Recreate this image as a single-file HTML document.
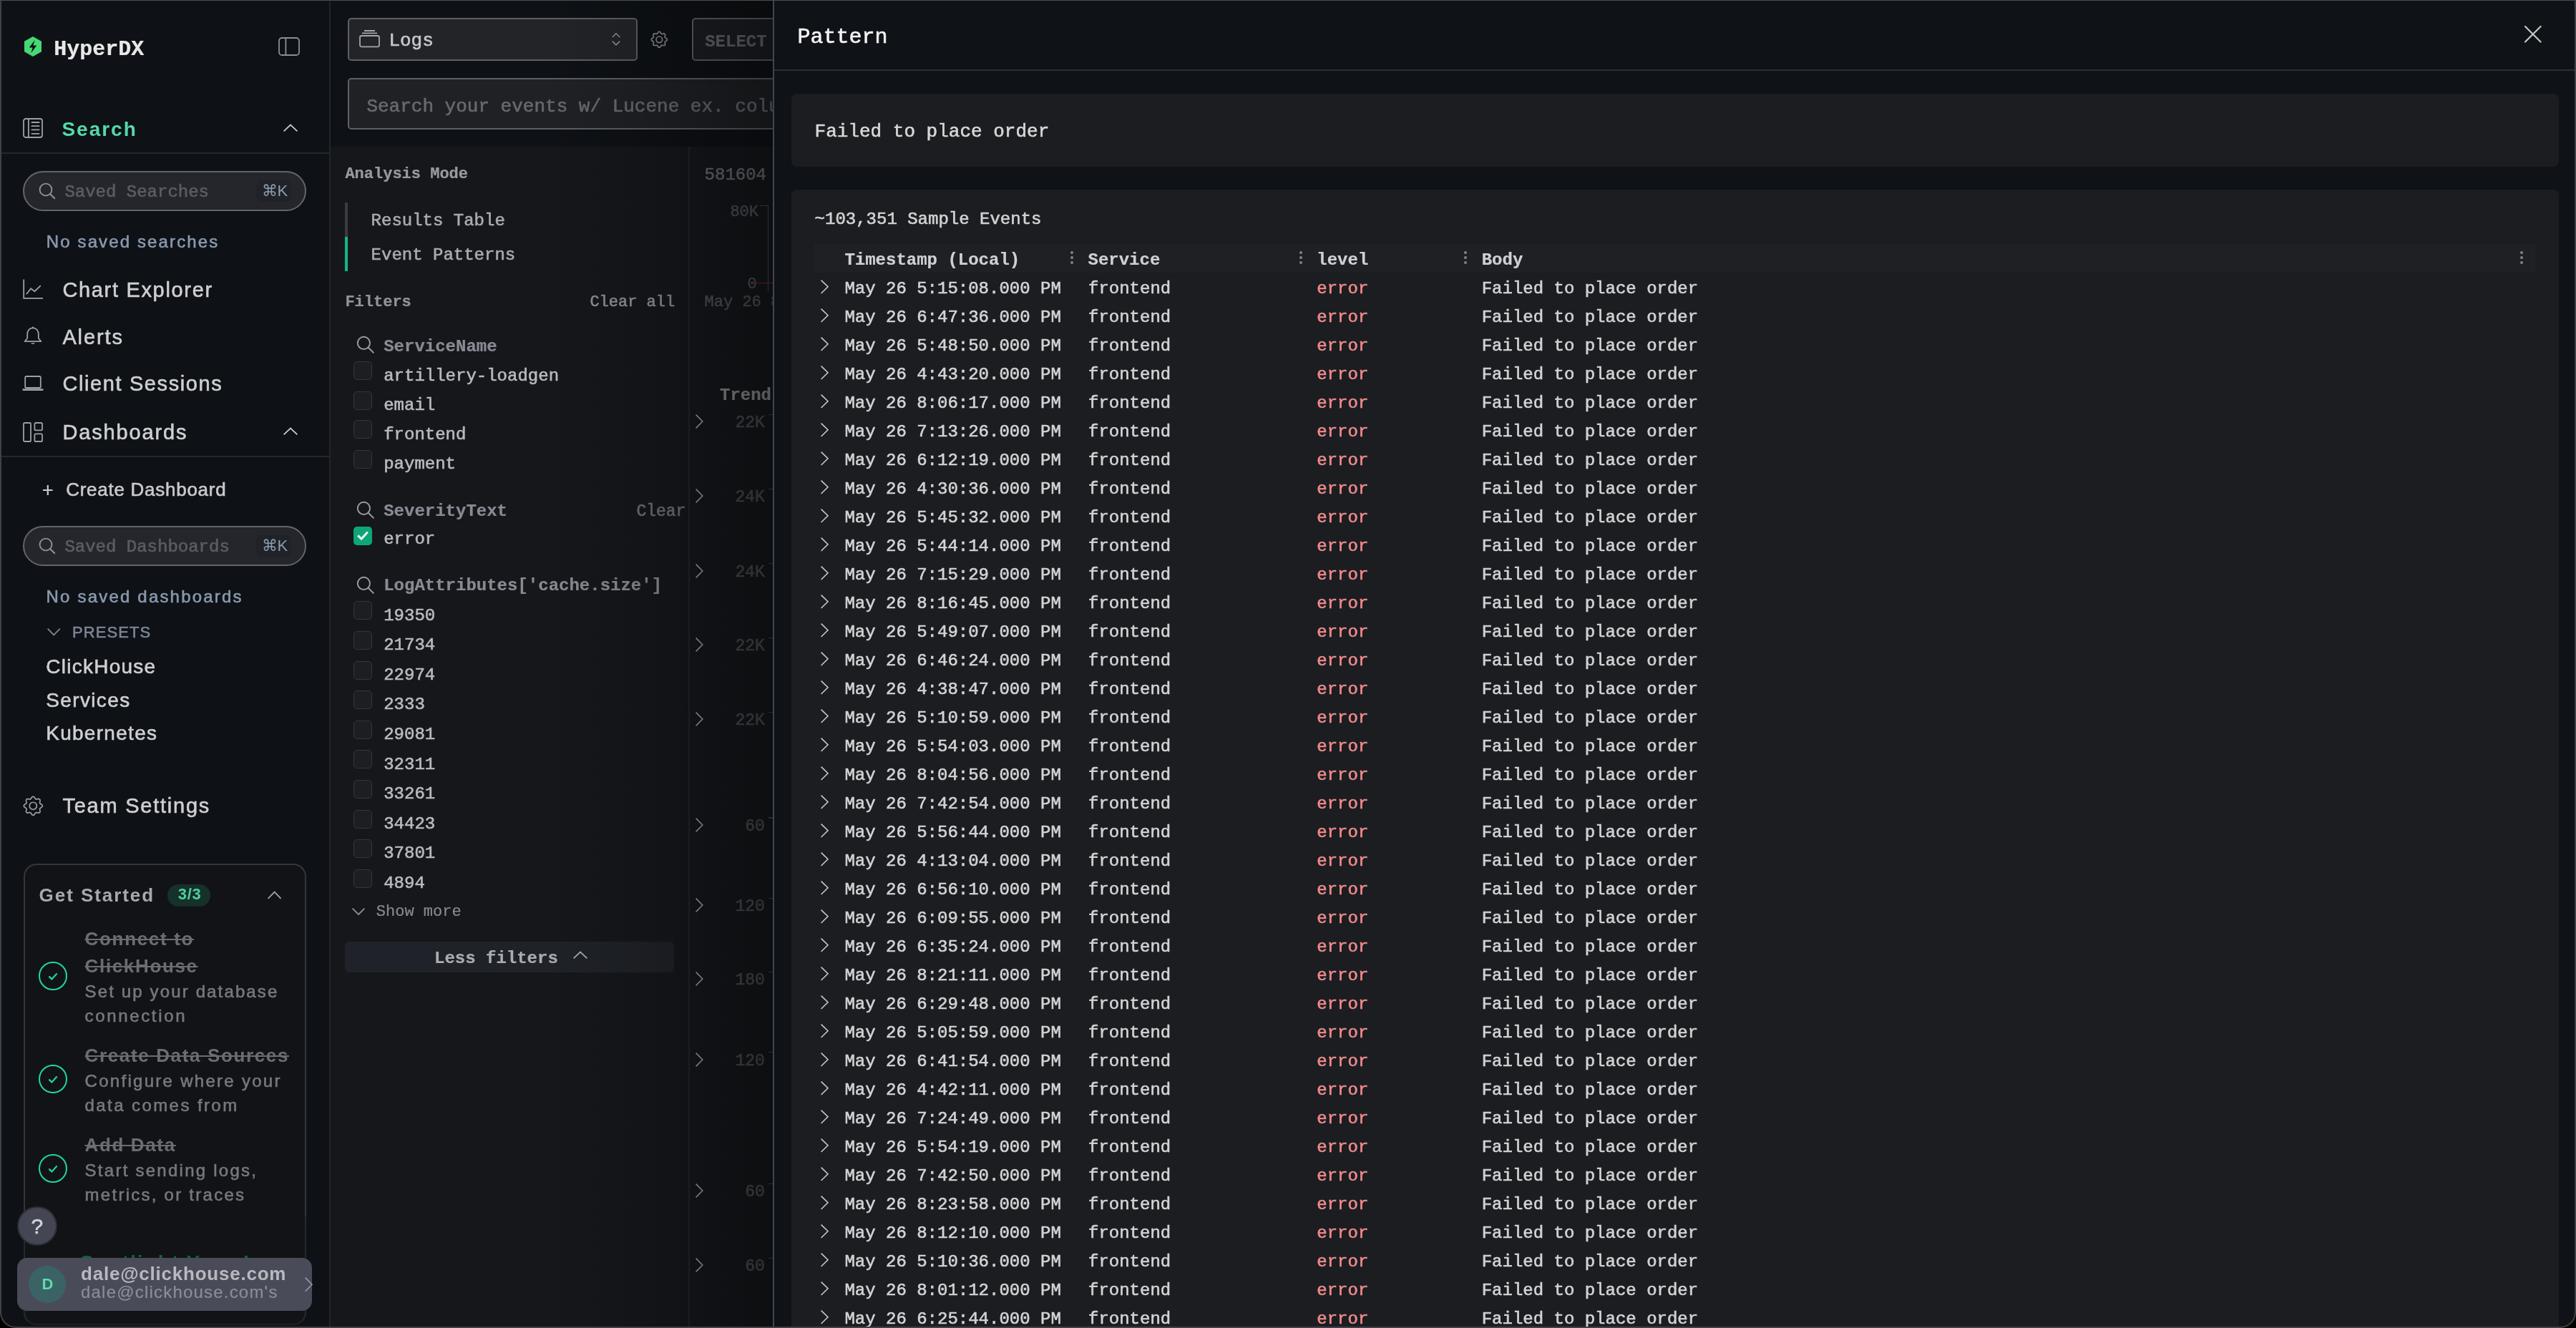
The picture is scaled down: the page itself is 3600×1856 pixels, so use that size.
<!DOCTYPE html>
<html><head><meta charset="utf-8">
<style>
html,body{margin:0;padding:0;background:#000;overflow:hidden;width:3600px;height:1856px;}
#root{zoom:2;position:relative;will-change:transform;width:1800px;height:928px;overflow:hidden;background:#0e1115;font-family:"Liberation Sans",sans-serif;}
.a{position:absolute;}
svg.a{display:block;overflow:visible;}
.t{position:absolute;white-space:nowrap;line-height:1;}
</style></head>
<body>
<div id="root">
<div class="a" style="left:0px;top:0px;width:230px;height:928px;background:#0e1115;"></div>
<div class="a" style="left:230px;top:0px;width:1px;height:928px;background:#212429;"></div>
<svg class="a" style="left:17px;top:25.5px;" width="12" height="14" viewBox="0 0 12 14"><polygon points="6,0 12,3.4 12,10.6 6,14 0,10.6 0,3.4" fill="#45d874"/><path d="M7.3 2.5 L3.4 7.7 L5.8 7.7 L4.7 11.6 L8.6 6.3 L6.2 6.3 Z" fill="#0e1115"/></svg>
<div class="t" style="left:37.6px;top:27.0px;font-size:15px;font-family:'Liberation Mono',monospace;font-weight:bold;color:#e8e8e8;-webkit-text-stroke:0.12px #e8e8e8;">HyperDX</div>
<svg class="a" style="left:194.3px;top:26px;" width="15" height="13" viewBox="0 0 15 13"><rect x="0.5" y="0.5" width="14" height="12" rx="2" fill="none" stroke="#8b8e94" stroke-width="0.9"/><line x1="5.2" y1="0.5" x2="5.2" y2="12.5" stroke="#8b8e94" stroke-width="0.9"/></svg>
<svg class="a" style="left:16px;top:82.5px;" width="14" height="14" viewBox="0 0 14 14"><rect x="0.5" y="0.5" width="13" height="13" rx="1.5" fill="none" stroke="#9aa1ac" stroke-width="0.9"/><line x1="3.95" y1="0.5" x2="3.95" y2="13.5" stroke="#9aa1ac" stroke-width="0.9"/><path d="M6.2 3H11.3M6.2 5.6H11.3M6.2 8.2H11.3M6.2 10.9H11.3" stroke="#9aa1ac" stroke-width="0.9" stroke-linecap="round"/></svg>
<div class="t" style="left:43.2px;top:83.44px;font-size:14px;font-family:'Liberation Sans',sans-serif;font-weight:bold;color:#56d9aa;letter-spacing:1.0px;">Search</div>
<svg class="a" style="left:198px;top:87px;" width="10" height="5" viewBox="0 0 10 5"><polyline points="0.3,4.7 5.0,0.3 9.7,4.7" fill="none" stroke="#c8c9cc" stroke-width="0.9"/></svg>
<div class="a" style="left:1px;top:106.5px;width:229px;height:1px;background:#24272c;"></div>
<div class="a" style="left:16px;top:119.6px;width:198px;height:27.9px;box-sizing:border-box;border:1px solid #64646e;border-radius:14px;background:#25262b;"></div>
<svg class="a" style="left:26.8px;top:127.5px;" width="12" height="12" viewBox="0 0 12 12"><circle cx="5" cy="5" r="4.2" fill="none" stroke="#8c9098" stroke-width="0.95"/><line x1="8.1" y1="8.1" x2="11.4" y2="11.4" stroke="#8c9098" stroke-width="1.1"/></svg>
<div class="t" style="left:45.2px;top:128.68px;font-size:12px;font-family:'Liberation Mono',monospace;font-weight:normal;color:#5a5d63;-webkit-text-stroke:0.3px #5a5d63;">Saved Searches</div>
<div class="a" style="left:178.8px;top:126px;width:24.5px;height:15px;border-radius:4px;background:#202227;"></div>
<div class="t" style="left:182.8px;top:128.16px;font-size:11px;font-family:'Liberation Sans',sans-serif;font-weight:normal;color:#8c9cb1;">⌘K</div>
<div class="t" style="left:32.4px;top:162.82px;font-size:12px;font-family:'Liberation Sans',sans-serif;font-weight:normal;color:#8898ae;letter-spacing:1.062px;-webkit-text-stroke:0.3px #8898ae;">No saved searches</div>
<svg class="a" style="left:16px;top:195px;" width="14" height="14" viewBox="0 0 14 14"><path d="M0.6 0.3V13.4H14" fill="none" stroke="#9aa1ac" stroke-width="0.9"/><polyline points="2.4,10.6 5.6,6.6 8.2,8.6 12.4,4.6" fill="none" stroke="#9aa1ac" stroke-width="0.9"/></svg>
<div class="t" style="left:43.7px;top:195.62px;font-size:14.5px;font-family:'Liberation Sans',sans-serif;font-weight:normal;color:#cfcfd2;letter-spacing:0.838px;-webkit-text-stroke:0.3px #cfcfd2;">Chart Explorer</div>
<svg class="a" style="left:16.4px;top:228px;" width="13" height="14" viewBox="0 0 13 14"><path d="M6.5 1.2C4 1.2 2.6 3.2 2.6 5.6V8.4L0.8 10.6H12.2L10.4 8.4V5.6C10.4 3.2 9 1.2 6.5 1.2Z" fill="none" stroke="#9aa1ac" stroke-width="0.9" stroke-linejoin="round"/><path d="M5 11.6A1.6 1.4 0 0 0 8 11.6Z" fill="#9aa1ac"/><circle cx="6.5" cy="0.9" r="0.6" fill="#9aa1ac"/></svg>
<div class="t" style="left:43.7px;top:228.42px;font-size:14.5px;font-family:'Liberation Sans',sans-serif;font-weight:normal;color:#cfcfd2;letter-spacing:0.94px;-webkit-text-stroke:0.3px #cfcfd2;">Alerts</div>
<svg class="a" style="left:16px;top:262.6px;" width="14" height="11" viewBox="0 0 14 11"><rect x="1.6" y="0.5" width="10.8" height="8" rx="0.8" fill="none" stroke="#9aa1ac" stroke-width="0.9"/><path d="M0.3 9.8H13.7" stroke="#9aa1ac" stroke-width="1.3" stroke-linecap="round"/></svg>
<div class="t" style="left:43.7px;top:261.22px;font-size:14.5px;font-family:'Liberation Sans',sans-serif;font-weight:normal;color:#cfcfd2;letter-spacing:0.807px;-webkit-text-stroke:0.3px #cfcfd2;">Client Sessions</div>
<svg class="a" style="left:16px;top:294.8px;" width="14" height="14" viewBox="0 0 14 14"><rect x="0.5" y="0.5" width="5" height="13" rx="0.8" fill="none" stroke="#9aa1ac" stroke-width="0.9"/><rect x="8.2" y="0.5" width="5.3" height="5.2" rx="0.8" fill="none" stroke="#9aa1ac" stroke-width="0.9"/><rect x="8.2" y="8.2" width="5.3" height="5.3" rx="0.8" fill="none" stroke="#9aa1ac" stroke-width="0.9"/></svg>
<div class="t" style="left:43.7px;top:294.82px;font-size:14.5px;font-family:'Liberation Sans',sans-serif;font-weight:normal;color:#cfcfd2;letter-spacing:0.933px;-webkit-text-stroke:0.3px #cfcfd2;">Dashboards</div>
<svg class="a" style="left:198px;top:299px;" width="10" height="5" viewBox="0 0 10 5"><polyline points="0.3,4.7 5.0,0.3 9.7,4.7" fill="none" stroke="#c8c9cc" stroke-width="0.9"/></svg>
<div class="a" style="left:1px;top:318.3px;width:229px;height:1px;background:#24272c;"></div>
<svg class="a" style="left:29.9px;top:339px;" width="6.8" height="7" viewBox="0 0 6.8 7"><path d="M3.4 0V7M0 3.5H6.8" stroke="#c9cacd" stroke-width="1.1"/></svg>
<div class="t" style="left:46.1px;top:335.63px;font-size:13px;font-family:'Liberation Sans',sans-serif;font-weight:normal;color:#c9cacd;letter-spacing:0.367px;-webkit-text-stroke:0.3px #c9cacd;">Create Dashboard</div>
<div class="a" style="left:16px;top:367.40000000000003px;width:198px;height:27.9px;box-sizing:border-box;border:1px solid #64646e;border-radius:14px;background:#25262b;"></div>
<svg class="a" style="left:26.8px;top:375.3px;" width="12" height="12" viewBox="0 0 12 12"><circle cx="5" cy="5" r="4.2" fill="none" stroke="#8c9098" stroke-width="0.95"/><line x1="8.1" y1="8.1" x2="11.4" y2="11.4" stroke="#8c9098" stroke-width="1.1"/></svg>
<div class="t" style="left:45.2px;top:376.48px;font-size:12px;font-family:'Liberation Mono',monospace;font-weight:normal;color:#5a5d63;-webkit-text-stroke:0.3px #5a5d63;">Saved Dashboards</div>
<div class="a" style="left:178.8px;top:373.8px;width:24.5px;height:15px;border-radius:4px;background:#202227;"></div>
<div class="t" style="left:182.8px;top:375.96px;font-size:11px;font-family:'Liberation Sans',sans-serif;font-weight:normal;color:#8c9cb1;">⌘K</div>
<div class="t" style="left:32.3px;top:410.92px;font-size:12px;font-family:'Liberation Sans',sans-serif;font-weight:normal;color:#8898ae;letter-spacing:1.094px;-webkit-text-stroke:0.3px #8898ae;">No saved dashboards</div>
<svg class="a" style="left:32.9px;top:439px;" width="9.2" height="5" viewBox="0 0 9.2 5"><polyline points="0.3,0.3 4.6,4.7 8.9,0.3" fill="none" stroke="#7b8596" stroke-width="0.9"/></svg>
<div class="t" style="left:50.5px;top:436.26px;font-size:11px;font-family:'Liberation Sans',sans-serif;font-weight:normal;color:#7b8596;letter-spacing:0.55px;-webkit-text-stroke:0.3px #7b8596;">PRESETS</div>
<div class="t" style="left:32.1px;top:458.94px;font-size:14px;font-family:'Liberation Sans',sans-serif;font-weight:normal;color:#cfcfd2;letter-spacing:0.633px;-webkit-text-stroke:0.3px #cfcfd2;">ClickHouse</div>
<div class="t" style="left:32.1px;top:482.34px;font-size:14px;font-family:'Liberation Sans',sans-serif;font-weight:normal;color:#cfcfd2;letter-spacing:0.686px;-webkit-text-stroke:0.3px #cfcfd2;">Services</div>
<div class="t" style="left:32.1px;top:505.74px;font-size:14px;font-family:'Liberation Sans',sans-serif;font-weight:normal;color:#cfcfd2;letter-spacing:0.644px;-webkit-text-stroke:0.3px #cfcfd2;">Kubernetes</div>
<svg class="a" style="left:16.25px;top:556.35px;" width="13.3" height="13.3" viewBox="0 0 13.3 13.3"><polygon points="6.65,0.13 7.07,0.24 7.45,0.55 7.78,0.98 8.05,1.41 8.31,1.77 8.58,1.98 8.93,2.03 9.36,1.96 9.86,1.84 10.39,1.77 10.88,1.82 11.26,2.04 11.48,2.42 11.53,2.91 11.46,3.44 11.34,3.94 11.27,4.37 11.32,4.72 11.53,4.99 11.89,5.25 12.32,5.52 12.75,5.85 13.06,6.23 13.17,6.65 13.06,7.07 12.75,7.45 12.32,7.78 11.89,8.05 11.53,8.31 11.32,8.58 11.27,8.93 11.34,9.36 11.46,9.86 11.53,10.39 11.48,10.88 11.26,11.26 10.88,11.48 10.39,11.53 9.86,11.46 9.36,11.34 8.93,11.27 8.58,11.32 8.31,11.53 8.05,11.89 7.78,12.32 7.45,12.75 7.07,13.06 6.65,13.17 6.23,13.06 5.85,12.75 5.52,12.32 5.25,11.89 4.99,11.53 4.72,11.32 4.37,11.27 3.94,11.34 3.44,11.46 2.91,11.53 2.42,11.48 2.04,11.26 1.82,10.88 1.77,10.39 1.84,9.86 1.96,9.36 2.03,8.93 1.98,8.58 1.77,8.31 1.41,8.05 0.98,7.78 0.55,7.45 0.24,7.07 0.13,6.65 0.24,6.23 0.55,5.85 0.98,5.52 1.41,5.25 1.77,4.99 1.98,4.72 2.03,4.37 1.96,3.94 1.84,3.44 1.77,2.91 1.82,2.42 2.04,2.04 2.42,1.82 2.91,1.77 3.44,1.84 3.94,1.96 4.37,2.03 4.72,1.98 4.99,1.77 5.25,1.41 5.52,0.98 5.85,0.55 6.23,0.24" fill="none" stroke="#9aa1ac" stroke-width="0.85" stroke-linejoin="round"/><circle cx="6.65" cy="6.65" r="2.527" fill="none" stroke="#9aa1ac" stroke-width="0.85"/></svg>
<div class="t" style="left:43.7px;top:555.92px;font-size:14.5px;font-family:'Liberation Sans',sans-serif;font-weight:normal;color:#cfcfd2;letter-spacing:0.883px;-webkit-text-stroke:0.3px #cfcfd2;">Team Settings</div>
<div class="a" style="left:16.4px;top:603.7px;width:197.8px;height:322.5px;box-sizing:border-box;border:1px solid #34363b;border-bottom-color:#25272b;border-radius:9px;background:#121316;"></div>
<div class="a" style="left:16.4px;top:850px;width:197.8px;height:76.2px;box-sizing:border-box;border:1px solid #26282c;border-top:0;border-bottom-color:#1f2125;border-radius:0 0 9px 9px;background:#121316;"></div>
<div class="t" style="left:27.3px;top:619.08px;font-size:13px;font-family:'Liberation Sans',sans-serif;font-weight:bold;color:#a8a9af;letter-spacing:0.97px;">Get Started</div>
<div class="a" style="left:117.2px;top:617.8px;width:29.6px;height:15.7px;border-radius:8px;background:#16302a;"></div>
<div class="t" style="left:124.4px;top:619.36px;font-size:11px;font-family:'Liberation Sans',sans-serif;font-weight:bold;color:#4fd1a0;letter-spacing:0.35px;">3/3</div>
<svg class="a" style="left:187.2px;top:623px;" width="9.6" height="5.3" viewBox="0 0 9.6 5.3"><polyline points="0.3,5.0 4.8,0.3 9.299999999999999,5.0" fill="none" stroke="#9aa1ac" stroke-width="0.9"/></svg>
<svg class="a" style="left:27px;top:672px;" width="20" height="20" viewBox="0 0 20 20"><circle cx="10" cy="10" r="9.5" fill="none" stroke="#20d7a0" stroke-width="1"/><polyline points="7.2,10.3 9.2,12.2 12.8,8.3" fill="none" stroke="#20d7a0" stroke-width="1.1"/></svg>
<div class="t" style="left:59.3px;top:649.48px;font-size:13px;font-family:'Liberation Sans',sans-serif;font-weight:bold;color:#6c6d73;letter-spacing:0.833px;text-decoration:line-through;text-decoration-thickness:1px;">Connect to</div>
<div class="t" style="left:59.3px;top:668.38px;font-size:13px;font-family:'Liberation Sans',sans-serif;font-weight:bold;color:#6c6d73;letter-spacing:0.822px;text-decoration:line-through;text-decoration-thickness:1px;">ClickHouse</div>
<div class="t" style="left:59.3px;top:687.12px;font-size:12px;font-family:'Liberation Sans',sans-serif;font-weight:normal;color:#77787e;letter-spacing:1.068px;-webkit-text-stroke:0.3px #77787e;">Set up your database</div>
<div class="t" style="left:59.3px;top:703.92px;font-size:12px;font-family:'Liberation Sans',sans-serif;font-weight:normal;color:#77787e;letter-spacing:1.322px;-webkit-text-stroke:0.3px #77787e;">connection</div>
<svg class="a" style="left:27px;top:743.8px;" width="20" height="20" viewBox="0 0 20 20"><circle cx="10" cy="10" r="9.5" fill="none" stroke="#20d7a0" stroke-width="1"/><polyline points="7.2,10.3 9.2,12.2 12.8,8.3" fill="none" stroke="#20d7a0" stroke-width="1.1"/></svg>
<div class="t" style="left:59.3px;top:731.08px;font-size:13px;font-family:'Liberation Sans',sans-serif;font-weight:bold;color:#6c6d73;letter-spacing:0.817px;text-decoration:line-through;text-decoration-thickness:1px;">Create Data Sources</div>
<div class="t" style="left:59.3px;top:749.42px;font-size:12px;font-family:'Liberation Sans',sans-serif;font-weight:normal;color:#77787e;letter-spacing:1.142px;-webkit-text-stroke:0.3px #77787e;">Configure where your</div>
<div class="t" style="left:59.3px;top:766.32px;font-size:12px;font-family:'Liberation Sans',sans-serif;font-weight:normal;color:#77787e;letter-spacing:1.207px;-webkit-text-stroke:0.3px #77787e;">data comes from</div>
<svg class="a" style="left:27px;top:806.5px;" width="20" height="20" viewBox="0 0 20 20"><circle cx="10" cy="10" r="9.5" fill="none" stroke="#20d7a0" stroke-width="1"/><polyline points="7.2,10.3 9.2,12.2 12.8,8.3" fill="none" stroke="#20d7a0" stroke-width="1.1"/></svg>
<div class="t" style="left:59.3px;top:793.43px;font-size:13px;font-family:'Liberation Sans',sans-serif;font-weight:bold;color:#6c6d73;letter-spacing:0.814px;text-decoration:line-through;text-decoration-thickness:1px;">Add Data</div>
<div class="t" style="left:59.3px;top:812.17px;font-size:12px;font-family:'Liberation Sans',sans-serif;font-weight:normal;color:#77787e;letter-spacing:1.128px;-webkit-text-stroke:0.3px #77787e;">Start sending logs,</div>
<div class="t" style="left:59.3px;top:828.92px;font-size:12px;font-family:'Liberation Sans',sans-serif;font-weight:normal;color:#77787e;letter-spacing:1.129px;-webkit-text-stroke:0.3px #77787e;">metrics, or traces</div>
<div class="a" style="left:12.2px;top:843.2px;width:27.6px;height:27.4px;box-sizing:border-box;border:1px solid #2c2d33;border-radius:50%;background:#454654;"></div>
<div class="t" style="left:21.8px;top:849.7px;font-size:15px;font-family:'Liberation Sans',sans-serif;font-weight:normal;color:#d2d3d8;-webkit-text-stroke:0.3px #d2d3d8;">?</div>
<div class="a" style="left:50px;top:868px;width:160px;height:12px;overflow:hidden;"><div class="t" style="left:6px;top:7.6px;font-size:14px;font-weight:bold;color:#12614a;font-family:'Liberation Sans',sans-serif;letter-spacing:1px;">Spotlight Your Logs</div></div>
<div class="a" style="left:12px;top:879px;width:206px;height:36.8px;border-radius:7px;background:#4a4b59;"></div>
<div class="a" style="left:20px;top:884.5px;width:26px;height:26px;border-radius:50%;background:#3b6265;"></div>
<div class="t" style="left:29.2px;top:891.96px;font-size:11px;font-family:'Liberation Sans',sans-serif;font-weight:bold;color:#5adcae;">D</div>
<div class="t" style="left:56.5px;top:883.38px;font-size:13px;font-family:'Liberation Sans',sans-serif;font-weight:bold;color:#b8b9c0;letter-spacing:0.389px;">dale@clickhouse.com</div>
<div class="t" style="left:56.5px;top:897.12px;font-size:12px;font-family:'Liberation Sans',sans-serif;font-weight:normal;color:#8c8d97;letter-spacing:0.6px;-webkit-text-stroke:0.1px #8c8d97;">dale@clickhouse.com's</div>
<svg class="a" style="left:212.9px;top:892.5px;" width="5.2" height="10.2" viewBox="0 0 5.2 10.2"><polyline points="0.3,0.3 5,5.1 0.3,9.9" fill="none" stroke="#8d9cb3" stroke-width="0.8"/></svg>
<div class="a" style="left:231px;top:0px;width:309px;height:928px;background:#15171b;"></div>
<div class="a" style="left:231px;top:0px;width:309px;height:102.5px;background:#0e1115;"></div>
<div class="a" style="left:243px;top:12.6px;width:202.4px;height:29.7px;box-sizing:border-box;border:1px solid #5f5f68;border-radius:2.5px;background:#222428;"></div>
<svg class="a" style="left:250.8px;top:20.8px;" width="14.5" height="12.2" viewBox="0 0 14.5 12.2"><rect x="0.5" y="4" width="13.5" height="7.7" rx="1.2" fill="none" stroke="#a3a6ab" stroke-width="0.9"/><path d="M2 2.2H12.5M3.5 0.5H11" stroke="#a3a6ab" stroke-width="0.9"/></svg>
<div class="t" style="left:271.7px;top:22.02px;font-size:13px;font-family:'Liberation Mono',monospace;font-weight:normal;color:#c6c7ca;-webkit-text-stroke:0.3px #c6c7ca;">Logs</div>
<svg class="a" style="left:427.5px;top:23px;" width="6" height="8.8" viewBox="0 0 6 8.8"><polyline points="0.4,3 3,0.4 5.6,3" fill="none" stroke="#8e9196" stroke-width="0.8"/><polyline points="0.4,5.8 3,8.4 5.6,5.8" fill="none" stroke="#8e9196" stroke-width="0.8"/></svg>
<svg class="a" style="left:454.75px;top:21.8px;" width="11.3" height="11.3" viewBox="0 0 11.3 11.3"><polygon points="5.65,0.11 6.01,0.21 6.33,0.47 6.61,0.83 6.84,1.20 7.06,1.51 7.29,1.68 7.59,1.72 7.95,1.66 8.38,1.56 8.83,1.50 9.25,1.55 9.57,1.73 9.75,2.05 9.80,2.47 9.74,2.92 9.64,3.35 9.58,3.71 9.62,4.01 9.79,4.24 10.10,4.46 10.47,4.69 10.83,4.97 11.09,5.29 11.19,5.65 11.09,6.01 10.83,6.33 10.47,6.61 10.10,6.84 9.79,7.06 9.62,7.29 9.58,7.59 9.64,7.95 9.74,8.38 9.80,8.83 9.75,9.25 9.57,9.57 9.25,9.75 8.83,9.80 8.38,9.74 7.95,9.64 7.59,9.58 7.29,9.62 7.06,9.79 6.84,10.10 6.61,10.47 6.33,10.83 6.01,11.09 5.65,11.19 5.29,11.09 4.97,10.83 4.69,10.47 4.46,10.10 4.24,9.79 4.01,9.62 3.71,9.58 3.35,9.64 2.92,9.74 2.47,9.80 2.05,9.75 1.73,9.57 1.55,9.25 1.50,8.83 1.56,8.38 1.66,7.95 1.72,7.59 1.68,7.29 1.51,7.06 1.20,6.84 0.83,6.61 0.47,6.33 0.21,6.01 0.11,5.65 0.21,5.29 0.47,4.97 0.83,4.69 1.20,4.46 1.51,4.24 1.68,4.01 1.72,3.71 1.66,3.35 1.56,2.92 1.50,2.47 1.55,2.05 1.73,1.73 2.05,1.55 2.47,1.50 2.92,1.56 3.35,1.66 3.71,1.72 4.01,1.68 4.24,1.51 4.46,1.20 4.69,0.83 4.97,0.47 5.29,0.21" fill="none" stroke="#87898d" stroke-width="0.85" stroke-linejoin="round"/><circle cx="5.65" cy="5.65" r="2.1470000000000002" fill="none" stroke="#87898d" stroke-width="0.85"/></svg>
<div class="a" style="left:483.5px;top:12.6px;width:120px;height:29.7px;box-sizing:border-box;border:1px solid #5f5f68;border-radius:2.5px;background:#1c1e22;"></div>
<div class="t" style="left:492.6px;top:23.38px;font-size:12px;font-family:'Liberation Mono',monospace;font-weight:bold;color:#66676c;-webkit-text-stroke:0.12px #66676c;">SELECT</div>
<div class="a" style="left:243px;top:54.5px;width:400px;height:36.1px;box-sizing:border-box;border:1px solid #5f5f68;border-radius:2.5px;background:#1f2125;"></div>
<div class="t" style="left:256.2px;top:67.82px;font-size:13px;font-family:'Liberation Mono',monospace;font-weight:normal;color:#66696e;-webkit-text-stroke:0.3px #66696e;">Search your events w/ Lucene ex. column:value</div>
<div class="a" style="left:481px;top:102.5px;width:1px;height:826px;background:#22252a;"></div>
<div class="t" style="left:241.2px;top:116.64px;font-size:11px;font-family:'Liberation Mono',monospace;font-weight:bold;color:#999a9d;-webkit-text-stroke:0.12px #999a9d;">Analysis Mode</div>
<div class="a" style="left:240.85px;top:141.5px;width:2.15px;height:23.85px;background:#3a3c41;"></div>
<div class="a" style="left:240.85px;top:165.35px;width:2.15px;height:24px;background:#12b886;"></div>
<div class="t" style="left:259.3px;top:148.68px;font-size:12px;font-family:'Liberation Mono',monospace;font-weight:normal;color:#aaabae;-webkit-text-stroke:0.3px #aaabae;">Results Table</div>
<div class="t" style="left:259.3px;top:172.68px;font-size:12px;font-family:'Liberation Mono',monospace;font-weight:normal;color:#aaabae;-webkit-text-stroke:0.3px #aaabae;">Event Patterns</div>
<div class="t" style="left:241.2px;top:205.79px;font-size:11px;font-family:'Liberation Mono',monospace;font-weight:bold;color:#939497;-webkit-text-stroke:0.12px #939497;">Filters</div>
<div class="t" style="left:412.2px;top:205.79px;font-size:11px;font-family:'Liberation Mono',monospace;font-weight:normal;color:#8f9195;-webkit-text-stroke:0.3px #8f9195;">Clear all</div>
<svg class="a" style="left:249px;top:234.7px;" width="12.7" height="12.7" viewBox="0 0 12.7 12.7"><circle cx="5.206999999999999" cy="5.206999999999999" r="4.3180000000000005" fill="none" stroke="#9a9ca1" stroke-width="0.95"/><line x1="8.382" y1="8.382" x2="12.191999999999998" y2="12.191999999999998" stroke="#9a9ca1" stroke-width="1"/></svg>
<div class="t" style="left:268.1px;top:236.38px;font-size:12px;font-family:'Liberation Mono',monospace;font-weight:bold;color:#8b8a94;-webkit-text-stroke:0.12px #8b8a94;">ServiceName</div>
<div class="a" style="left:247px;top:252.49999999999997px;width:13px;height:13px;box-sizing:border-box;border-radius:2.5px;border:0.8px solid #33363c;background:#1c1e22;"></div>
<div class="t" style="left:268.1px;top:256.78px;font-size:12px;font-family:'Liberation Mono',monospace;font-weight:normal;color:#b9babd;-webkit-text-stroke:0.3px #b9babd;">artillery-loadgen</div>
<div class="a" style="left:247px;top:273.3px;width:13px;height:13px;box-sizing:border-box;border-radius:2.5px;border:0.8px solid #33363c;background:#1c1e22;"></div>
<div class="t" style="left:268.1px;top:277.58px;font-size:12px;font-family:'Liberation Mono',monospace;font-weight:normal;color:#b9babd;-webkit-text-stroke:0.3px #b9babd;">email</div>
<div class="a" style="left:247px;top:293.6px;width:13px;height:13px;box-sizing:border-box;border-radius:2.5px;border:0.8px solid #33363c;background:#1c1e22;"></div>
<div class="t" style="left:268.1px;top:297.88px;font-size:12px;font-family:'Liberation Mono',monospace;font-weight:normal;color:#b9babd;-webkit-text-stroke:0.3px #b9babd;">frontend</div>
<div class="a" style="left:247px;top:314.3px;width:13px;height:13px;box-sizing:border-box;border-radius:2.5px;border:0.8px solid #33363c;background:#1c1e22;"></div>
<div class="t" style="left:268.1px;top:318.58px;font-size:12px;font-family:'Liberation Mono',monospace;font-weight:normal;color:#b9babd;-webkit-text-stroke:0.3px #b9babd;">payment</div>
<svg class="a" style="left:249px;top:349.8px;" width="12.7" height="12.7" viewBox="0 0 12.7 12.7"><circle cx="5.206999999999999" cy="5.206999999999999" r="4.3180000000000005" fill="none" stroke="#9a9ca1" stroke-width="0.95"/><line x1="8.382" y1="8.382" x2="12.191999999999998" y2="12.191999999999998" stroke="#9a9ca1" stroke-width="1"/></svg>
<div class="t" style="left:268.1px;top:351.48px;font-size:12px;font-family:'Liberation Mono',monospace;font-weight:bold;color:#8b8a94;-webkit-text-stroke:0.12px #8b8a94;">SeverityText</div>
<div class="t" style="left:444.7px;top:351.86px;font-size:11.5px;font-family:'Liberation Mono',monospace;font-weight:normal;color:#6e7074;-webkit-text-stroke:0.3px #6e7074;">Clear</div>
<div class="a" style="left:247px;top:368px;width:13px;height:13px;border-radius:2.5px;background:#0ca678;"></div>
<svg class="a" style="left:249.5px;top:371px;" width="8" height="6.5" viewBox="0 0 8 6.5"><polyline points="0.6,3.2 3,5.6 7.4,0.8" fill="none" stroke="#f2f2f2" stroke-width="1.5"/></svg>
<div class="t" style="left:268.1px;top:371.08px;font-size:12px;font-family:'Liberation Mono',monospace;font-weight:normal;color:#b9babd;-webkit-text-stroke:0.3px #b9babd;">error</div>
<svg class="a" style="left:249px;top:402.5px;" width="12.7" height="12.7" viewBox="0 0 12.7 12.7"><circle cx="5.206999999999999" cy="5.206999999999999" r="4.3180000000000005" fill="none" stroke="#9a9ca1" stroke-width="0.95"/><line x1="8.382" y1="8.382" x2="12.191999999999998" y2="12.191999999999998" stroke="#9a9ca1" stroke-width="1"/></svg>
<div class="t" style="left:268.1px;top:403.48px;font-size:12px;font-family:'Liberation Mono',monospace;font-weight:bold;color:#8b8a94;-webkit-text-stroke:0.12px #8b8a94;">LogAttributes['cache.size']</div>
<div class="a" style="left:247px;top:420.2px;width:13px;height:13px;box-sizing:border-box;border-radius:2.5px;border:0.8px solid #33363c;background:#1c1e22;"></div>
<div class="t" style="left:268.1px;top:424.28px;font-size:12px;font-family:'Liberation Mono',monospace;font-weight:normal;color:#b9babd;-webkit-text-stroke:0.3px #b9babd;">19350</div>
<div class="a" style="left:247px;top:441.0px;width:13px;height:13px;box-sizing:border-box;border-radius:2.5px;border:0.8px solid #33363c;background:#1c1e22;"></div>
<div class="t" style="left:268.1px;top:445.08px;font-size:12px;font-family:'Liberation Mono',monospace;font-weight:normal;color:#b9babd;-webkit-text-stroke:0.3px #b9babd;">21734</div>
<div class="a" style="left:247px;top:461.8px;width:13px;height:13px;box-sizing:border-box;border-radius:2.5px;border:0.8px solid #33363c;background:#1c1e22;"></div>
<div class="t" style="left:268.1px;top:465.88px;font-size:12px;font-family:'Liberation Mono',monospace;font-weight:normal;color:#b9babd;-webkit-text-stroke:0.3px #b9babd;">22974</div>
<div class="a" style="left:247px;top:482.59999999999997px;width:13px;height:13px;box-sizing:border-box;border-radius:2.5px;border:0.8px solid #33363c;background:#1c1e22;"></div>
<div class="t" style="left:268.1px;top:486.68px;font-size:12px;font-family:'Liberation Mono',monospace;font-weight:normal;color:#b9babd;-webkit-text-stroke:0.3px #b9babd;">2333</div>
<div class="a" style="left:247px;top:503.40000000000003px;width:13px;height:13px;box-sizing:border-box;border-radius:2.5px;border:0.8px solid #33363c;background:#1c1e22;"></div>
<div class="t" style="left:268.1px;top:507.48px;font-size:12px;font-family:'Liberation Mono',monospace;font-weight:normal;color:#b9babd;-webkit-text-stroke:0.3px #b9babd;">29081</div>
<div class="a" style="left:247px;top:524.1999999999999px;width:13px;height:13px;box-sizing:border-box;border-radius:2.5px;border:0.8px solid #33363c;background:#1c1e22;"></div>
<div class="t" style="left:268.1px;top:528.28px;font-size:12px;font-family:'Liberation Mono',monospace;font-weight:normal;color:#b9babd;-webkit-text-stroke:0.3px #b9babd;">32311</div>
<div class="a" style="left:247px;top:545.0px;width:13px;height:13px;box-sizing:border-box;border-radius:2.5px;border:0.8px solid #33363c;background:#1c1e22;"></div>
<div class="t" style="left:268.1px;top:549.08px;font-size:12px;font-family:'Liberation Mono',monospace;font-weight:normal;color:#b9babd;-webkit-text-stroke:0.3px #b9babd;">33261</div>
<div class="a" style="left:247px;top:565.8px;width:13px;height:13px;box-sizing:border-box;border-radius:2.5px;border:0.8px solid #33363c;background:#1c1e22;"></div>
<div class="t" style="left:268.1px;top:569.88px;font-size:12px;font-family:'Liberation Mono',monospace;font-weight:normal;color:#b9babd;-webkit-text-stroke:0.3px #b9babd;">34423</div>
<div class="a" style="left:247px;top:586.5999999999999px;width:13px;height:13px;box-sizing:border-box;border-radius:2.5px;border:0.8px solid #33363c;background:#1c1e22;"></div>
<div class="t" style="left:268.1px;top:590.68px;font-size:12px;font-family:'Liberation Mono',monospace;font-weight:normal;color:#b9babd;-webkit-text-stroke:0.3px #b9babd;">37801</div>
<div class="a" style="left:247px;top:607.4px;width:13px;height:13px;box-sizing:border-box;border-radius:2.5px;border:0.8px solid #33363c;background:#1c1e22;"></div>
<div class="t" style="left:268.1px;top:611.48px;font-size:12px;font-family:'Liberation Mono',monospace;font-weight:normal;color:#b9babd;-webkit-text-stroke:0.3px #b9babd;">4894</div>
<svg class="a" style="left:246px;top:634.3px;" width="9" height="4.8" viewBox="0 0 9 4.8"><polyline points="0.3,0.3 4.5,4.5 8.7,0.3" fill="none" stroke="#8e9094" stroke-width="0.9"/></svg>
<div class="t" style="left:262.9px;top:631.84px;font-size:11px;font-family:'Liberation Mono',monospace;font-weight:normal;color:#88898f;-webkit-text-stroke:0.1px #88898f;">Show more</div>
<div class="a" style="left:241.2px;top:657.8px;width:229.7px;height:21.5px;border-radius:3px;background:#1f2228;"></div>
<div class="t" style="left:303.5px;top:663.88px;font-size:12px;font-family:'Liberation Mono',monospace;font-weight:bold;color:#abacb2;-webkit-text-stroke:0.12px #abacb2;">Less filters</div>
<svg class="a" style="left:400.4px;top:665px;" width="10" height="5" viewBox="0 0 10 5"><polyline points="0.3,4.7 5.0,0.3 9.7,4.7" fill="none" stroke="#abacb2" stroke-width="0.9"/></svg>
<div class="t" style="left:492.3px;top:116.48px;font-size:12px;font-family:'Liberation Mono',monospace;font-weight:normal;color:#67696d;-webkit-text-stroke:0.3px #67696d;">581604</div>
<div class="t" style="left:510.2px;top:142.84px;font-size:11px;font-family:'Liberation Mono',monospace;font-weight:normal;color:#4d4f53;-webkit-text-stroke:0.3px #4d4f53;">80K</div>
<div class="a" style="left:531px;top:143.4px;width:6px;height:0.6px;background:#4a4c50;"></div>
<div class="a" style="left:536.6px;top:143.4px;width:0.6px;height:60px;background:#4a4c50;"></div>
<div class="t" style="left:522.3px;top:193.44px;font-size:11px;font-family:'Liberation Mono',monospace;font-weight:normal;color:#4d4f53;-webkit-text-stroke:0.3px #4d4f53;">0</div>
<div class="a" style="left:526.5px;top:197.5px;width:14px;height:0.7px;background:#7a2838;"></div>
<div class="t" style="left:492.3px;top:205.94px;font-size:11px;font-family:'Liberation Mono',monospace;font-weight:normal;color:#4d4f53;-webkit-text-stroke:0.3px #4d4f53;">May 26 8</div>
<div class="t" style="left:503px;top:270.38px;font-size:12px;font-family:'Liberation Mono',monospace;font-weight:bold;color:#8a8b8e;-webkit-text-stroke:0.12px #8a8b8e;">Trend</div>
<svg class="a" style="left:486.2px;top:289.6px;" width="5.2" height="10" viewBox="0 0 5.2 10"><polyline points="0.3,0.3 4.9,5 0.3,9.7" fill="none" stroke="#9ea0a4" stroke-width="0.8"/></svg>
<div class="t" style="left:513.7px;top:290.06px;font-size:11.5px;font-family:'Liberation Mono',monospace;font-weight:normal;color:#4a4c50;-webkit-text-stroke:0.3px #4a4c50;">22K</div>
<div class="a" style="left:537px;top:289.40000000000003px;width:3px;height:0.6px;background:#45474b;"></div>
<svg class="a" style="left:486.2px;top:341.5px;" width="5.2" height="10" viewBox="0 0 5.2 10"><polyline points="0.3,0.3 4.9,5 0.3,9.7" fill="none" stroke="#9ea0a4" stroke-width="0.8"/></svg>
<div class="t" style="left:513.7px;top:341.96px;font-size:11.5px;font-family:'Liberation Mono',monospace;font-weight:normal;color:#4a4c50;-webkit-text-stroke:0.3px #4a4c50;">24K</div>
<div class="a" style="left:537px;top:341.3px;width:3px;height:0.6px;background:#45474b;"></div>
<svg class="a" style="left:486.2px;top:393.8px;" width="5.2" height="10" viewBox="0 0 5.2 10"><polyline points="0.3,0.3 4.9,5 0.3,9.7" fill="none" stroke="#9ea0a4" stroke-width="0.8"/></svg>
<div class="t" style="left:513.7px;top:394.26px;font-size:11.5px;font-family:'Liberation Mono',monospace;font-weight:normal;color:#4a4c50;-webkit-text-stroke:0.3px #4a4c50;">24K</div>
<div class="a" style="left:537px;top:393.6px;width:3px;height:0.6px;background:#45474b;"></div>
<svg class="a" style="left:486.2px;top:445.7px;" width="5.2" height="10" viewBox="0 0 5.2 10"><polyline points="0.3,0.3 4.9,5 0.3,9.7" fill="none" stroke="#9ea0a4" stroke-width="0.8"/></svg>
<div class="t" style="left:513.7px;top:446.16px;font-size:11.5px;font-family:'Liberation Mono',monospace;font-weight:normal;color:#4a4c50;-webkit-text-stroke:0.3px #4a4c50;">22K</div>
<div class="a" style="left:537px;top:445.5px;width:3px;height:0.6px;background:#45474b;"></div>
<svg class="a" style="left:486.2px;top:497.5px;" width="5.2" height="10" viewBox="0 0 5.2 10"><polyline points="0.3,0.3 4.9,5 0.3,9.7" fill="none" stroke="#9ea0a4" stroke-width="0.8"/></svg>
<div class="t" style="left:513.7px;top:497.96px;font-size:11.5px;font-family:'Liberation Mono',monospace;font-weight:normal;color:#4a4c50;-webkit-text-stroke:0.3px #4a4c50;">22K</div>
<div class="a" style="left:537px;top:497.3px;width:3px;height:0.6px;background:#45474b;"></div>
<svg class="a" style="left:486.2px;top:571.4px;" width="5.2" height="10" viewBox="0 0 5.2 10"><polyline points="0.3,0.3 4.9,5 0.3,9.7" fill="none" stroke="#9ea0a4" stroke-width="0.8"/></svg>
<div class="t" style="left:520.6px;top:571.86px;font-size:11.5px;font-family:'Liberation Mono',monospace;font-weight:normal;color:#4a4c50;-webkit-text-stroke:0.3px #4a4c50;">60</div>
<div class="a" style="left:537px;top:571.1999999999999px;width:3px;height:0.6px;background:#45474b;"></div>
<svg class="a" style="left:486.2px;top:627.6px;" width="5.2" height="10" viewBox="0 0 5.2 10"><polyline points="0.3,0.3 4.9,5 0.3,9.7" fill="none" stroke="#9ea0a4" stroke-width="0.8"/></svg>
<div class="t" style="left:513.7px;top:628.06px;font-size:11.5px;font-family:'Liberation Mono',monospace;font-weight:normal;color:#4a4c50;-webkit-text-stroke:0.3px #4a4c50;">120</div>
<div class="a" style="left:537px;top:627.4px;width:3px;height:0.6px;background:#45474b;"></div>
<svg class="a" style="left:486.2px;top:679.1px;" width="5.2" height="10" viewBox="0 0 5.2 10"><polyline points="0.3,0.3 4.9,5 0.3,9.7" fill="none" stroke="#9ea0a4" stroke-width="0.8"/></svg>
<div class="t" style="left:513.7px;top:679.56px;font-size:11.5px;font-family:'Liberation Mono',monospace;font-weight:normal;color:#4a4c50;-webkit-text-stroke:0.3px #4a4c50;">180</div>
<div class="a" style="left:537px;top:678.9px;width:3px;height:0.6px;background:#45474b;"></div>
<svg class="a" style="left:486.2px;top:735.3px;" width="5.2" height="10" viewBox="0 0 5.2 10"><polyline points="0.3,0.3 4.9,5 0.3,9.7" fill="none" stroke="#9ea0a4" stroke-width="0.8"/></svg>
<div class="t" style="left:513.7px;top:735.76px;font-size:11.5px;font-family:'Liberation Mono',monospace;font-weight:normal;color:#4a4c50;-webkit-text-stroke:0.3px #4a4c50;">120</div>
<div class="a" style="left:537px;top:735.0999999999999px;width:3px;height:0.6px;background:#45474b;"></div>
<svg class="a" style="left:486.2px;top:827.2px;" width="5.2" height="10" viewBox="0 0 5.2 10"><polyline points="0.3,0.3 4.9,5 0.3,9.7" fill="none" stroke="#9ea0a4" stroke-width="0.8"/></svg>
<div class="t" style="left:520.6px;top:827.66px;font-size:11.5px;font-family:'Liberation Mono',monospace;font-weight:normal;color:#4a4c50;-webkit-text-stroke:0.3px #4a4c50;">60</div>
<div class="a" style="left:537px;top:827.0px;width:3px;height:0.6px;background:#45474b;"></div>
<svg class="a" style="left:486.2px;top:879px;" width="5.2" height="10" viewBox="0 0 5.2 10"><polyline points="0.3,0.3 4.9,5 0.3,9.7" fill="none" stroke="#9ea0a4" stroke-width="0.8"/></svg>
<div class="t" style="left:520.6px;top:879.46px;font-size:11.5px;font-family:'Liberation Mono',monospace;font-weight:normal;color:#4a4c50;-webkit-text-stroke:0.3px #4a4c50;">60</div>
<div class="a" style="left:537px;top:878.8px;width:3px;height:0.6px;background:#45474b;"></div>
<div class="a" style="left:380px;top:0;width:160px;height:928px;background:linear-gradient(90deg,rgba(0,0,0,0) 0%,rgba(0,0,0,0.12) 40%,rgba(0,0,0,0.38) 100%);"></div>
<div class="a" style="left:540px;top:0;width:1px;height:928px;background:#3d4657;"></div>
<div class="a" style="left:541px;top:0px;width:1259px;height:928px;background:#0f1216;"></div>
<div class="t" style="left:557.2px;top:18.4px;font-size:15px;font-family:'Liberation Mono',monospace;font-weight:normal;color:#f3f3f3;-webkit-text-stroke:0.3px #f3f3f3;">Pattern</div>
<svg class="a" style="left:1763.8px;top:18.2px;" width="11.8" height="11.8" viewBox="0 0 11.8 11.8"><path d="M0.5 0.5L11.3 11.3M11.3 0.5L0.5 11.3" stroke="#c6c6c6" stroke-width="1.1" stroke-linecap="round"/></svg>
<div class="a" style="left:541px;top:48.5px;width:1259px;height:1px;background:#2b2e34;"></div>
<div class="a" style="left:553px;top:65.6px;width:1235px;height:50.7px;border-radius:4px;background:#1b1d21;"></div>
<div class="t" style="left:569.3px;top:85.72px;font-size:13px;font-family:'Liberation Mono',monospace;font-weight:normal;color:#d7d7d7;-webkit-text-stroke:0.3px #d7d7d7;">Failed to place order</div>
<div class="a" style="left:553px;top:132.3px;width:1235px;height:830px;border-radius:4px;background:#1b1d21;"></div>
<div class="t" style="left:569.3px;top:147.33px;font-size:12px;font-family:'Liberation Mono',monospace;font-weight:normal;color:#d2d2d3;-webkit-text-stroke:0.3px #d2d2d3;">~103,351 Sample Events</div>
<div class="a" style="left:568.8px;top:170.5px;width:1202.7px;height:20.2px;background:#1e2024;"></div>
<div class="t" style="left:590.2px;top:176.13px;font-size:12px;font-family:'Liberation Mono',monospace;font-weight:bold;color:#cfd0d3;-webkit-text-stroke:0.12px #cfd0d3;">Timestamp (Local)</div>
<div class="t" style="left:760.25px;top:176.13px;font-size:12px;font-family:'Liberation Mono',monospace;font-weight:bold;color:#cfd0d3;-webkit-text-stroke:0.12px #cfd0d3;">Service</div>
<div class="t" style="left:920.15px;top:176.13px;font-size:12px;font-family:'Liberation Mono',monospace;font-weight:bold;color:#cfd0d3;-webkit-text-stroke:0.12px #cfd0d3;">level</div>
<div class="t" style="left:1035.35px;top:176.13px;font-size:12px;font-family:'Liberation Mono',monospace;font-weight:bold;color:#cfd0d3;-webkit-text-stroke:0.12px #cfd0d3;">Body</div>
<svg class="a" style="left:748px;top:175.6px;" width="2" height="9" viewBox="0 0 2 9"><circle cx="1" cy="1" r="1" fill="#7c8590"/><circle cx="1" cy="4.5" r="1" fill="#7c8590"/><circle cx="1" cy="8" r="1" fill="#7c8590"/></svg>
<svg class="a" style="left:907.85px;top:175.6px;" width="2" height="9" viewBox="0 0 2 9"><circle cx="1" cy="1" r="1" fill="#7c8590"/><circle cx="1" cy="4.5" r="1" fill="#7c8590"/><circle cx="1" cy="8" r="1" fill="#7c8590"/></svg>
<svg class="a" style="left:1022.75px;top:175.6px;" width="2" height="9" viewBox="0 0 2 9"><circle cx="1" cy="1" r="1" fill="#7c8590"/><circle cx="1" cy="4.5" r="1" fill="#7c8590"/><circle cx="1" cy="8" r="1" fill="#7c8590"/></svg>
<svg class="a" style="left:1761px;top:175.6px;" width="2" height="9" viewBox="0 0 2 9"><circle cx="1" cy="1" r="1" fill="#7c8590"/><circle cx="1" cy="4.5" r="1" fill="#7c8590"/><circle cx="1" cy="8" r="1" fill="#7c8590"/></svg>
<svg class="a" style="left:573.25px;top:195.6px;" width="5.4" height="9.8" viewBox="0 0 5.4 9.8"><polyline points="0.3,0.3 5,4.9 0.3,9.5" fill="none" stroke="#c9c9ca" stroke-width="0.8"/></svg>
<div class="t" style="left:590.2px;top:196.13px;font-size:12px;font-family:'Liberation Mono',monospace;font-weight:normal;color:#d3d3d4;-webkit-text-stroke:0.3px #d3d3d4;">May 26 5:15:08.000 PM</div>
<div class="t" style="left:760.5px;top:196.13px;font-size:12px;font-family:'Liberation Mono',monospace;font-weight:normal;color:#d3d3d4;-webkit-text-stroke:0.3px #d3d3d4;">frontend</div>
<div class="t" style="left:920.15px;top:196.13px;font-size:12px;font-family:'Liberation Mono',monospace;font-weight:normal;color:#f08a8a;-webkit-text-stroke:0.3px #f08a8a;">error</div>
<div class="t" style="left:1035.35px;top:196.13px;font-size:12px;font-family:'Liberation Mono',monospace;font-weight:normal;color:#d3d3d4;-webkit-text-stroke:0.3px #d3d3d4;">Failed to place order</div>
<svg class="a" style="left:573.25px;top:215.6px;" width="5.4" height="9.8" viewBox="0 0 5.4 9.8"><polyline points="0.3,0.3 5,4.9 0.3,9.5" fill="none" stroke="#c9c9ca" stroke-width="0.8"/></svg>
<div class="t" style="left:590.2px;top:216.13px;font-size:12px;font-family:'Liberation Mono',monospace;font-weight:normal;color:#d3d3d4;-webkit-text-stroke:0.3px #d3d3d4;">May 26 6:47:36.000 PM</div>
<div class="t" style="left:760.5px;top:216.13px;font-size:12px;font-family:'Liberation Mono',monospace;font-weight:normal;color:#d3d3d4;-webkit-text-stroke:0.3px #d3d3d4;">frontend</div>
<div class="t" style="left:920.15px;top:216.13px;font-size:12px;font-family:'Liberation Mono',monospace;font-weight:normal;color:#f08a8a;-webkit-text-stroke:0.3px #f08a8a;">error</div>
<div class="t" style="left:1035.35px;top:216.13px;font-size:12px;font-family:'Liberation Mono',monospace;font-weight:normal;color:#d3d3d4;-webkit-text-stroke:0.3px #d3d3d4;">Failed to place order</div>
<svg class="a" style="left:573.25px;top:235.6px;" width="5.4" height="9.8" viewBox="0 0 5.4 9.8"><polyline points="0.3,0.3 5,4.9 0.3,9.5" fill="none" stroke="#c9c9ca" stroke-width="0.8"/></svg>
<div class="t" style="left:590.2px;top:236.13px;font-size:12px;font-family:'Liberation Mono',monospace;font-weight:normal;color:#d3d3d4;-webkit-text-stroke:0.3px #d3d3d4;">May 26 5:48:50.000 PM</div>
<div class="t" style="left:760.5px;top:236.13px;font-size:12px;font-family:'Liberation Mono',monospace;font-weight:normal;color:#d3d3d4;-webkit-text-stroke:0.3px #d3d3d4;">frontend</div>
<div class="t" style="left:920.15px;top:236.13px;font-size:12px;font-family:'Liberation Mono',monospace;font-weight:normal;color:#f08a8a;-webkit-text-stroke:0.3px #f08a8a;">error</div>
<div class="t" style="left:1035.35px;top:236.13px;font-size:12px;font-family:'Liberation Mono',monospace;font-weight:normal;color:#d3d3d4;-webkit-text-stroke:0.3px #d3d3d4;">Failed to place order</div>
<svg class="a" style="left:573.25px;top:255.6px;" width="5.4" height="9.8" viewBox="0 0 5.4 9.8"><polyline points="0.3,0.3 5,4.9 0.3,9.5" fill="none" stroke="#c9c9ca" stroke-width="0.8"/></svg>
<div class="t" style="left:590.2px;top:256.13px;font-size:12px;font-family:'Liberation Mono',monospace;font-weight:normal;color:#d3d3d4;-webkit-text-stroke:0.3px #d3d3d4;">May 26 4:43:20.000 PM</div>
<div class="t" style="left:760.5px;top:256.13px;font-size:12px;font-family:'Liberation Mono',monospace;font-weight:normal;color:#d3d3d4;-webkit-text-stroke:0.3px #d3d3d4;">frontend</div>
<div class="t" style="left:920.15px;top:256.13px;font-size:12px;font-family:'Liberation Mono',monospace;font-weight:normal;color:#f08a8a;-webkit-text-stroke:0.3px #f08a8a;">error</div>
<div class="t" style="left:1035.35px;top:256.13px;font-size:12px;font-family:'Liberation Mono',monospace;font-weight:normal;color:#d3d3d4;-webkit-text-stroke:0.3px #d3d3d4;">Failed to place order</div>
<svg class="a" style="left:573.25px;top:275.6px;" width="5.4" height="9.8" viewBox="0 0 5.4 9.8"><polyline points="0.3,0.3 5,4.9 0.3,9.5" fill="none" stroke="#c9c9ca" stroke-width="0.8"/></svg>
<div class="t" style="left:590.2px;top:276.13px;font-size:12px;font-family:'Liberation Mono',monospace;font-weight:normal;color:#d3d3d4;-webkit-text-stroke:0.3px #d3d3d4;">May 26 8:06:17.000 PM</div>
<div class="t" style="left:760.5px;top:276.13px;font-size:12px;font-family:'Liberation Mono',monospace;font-weight:normal;color:#d3d3d4;-webkit-text-stroke:0.3px #d3d3d4;">frontend</div>
<div class="t" style="left:920.15px;top:276.13px;font-size:12px;font-family:'Liberation Mono',monospace;font-weight:normal;color:#f08a8a;-webkit-text-stroke:0.3px #f08a8a;">error</div>
<div class="t" style="left:1035.35px;top:276.13px;font-size:12px;font-family:'Liberation Mono',monospace;font-weight:normal;color:#d3d3d4;-webkit-text-stroke:0.3px #d3d3d4;">Failed to place order</div>
<svg class="a" style="left:573.25px;top:295.6px;" width="5.4" height="9.8" viewBox="0 0 5.4 9.8"><polyline points="0.3,0.3 5,4.9 0.3,9.5" fill="none" stroke="#c9c9ca" stroke-width="0.8"/></svg>
<div class="t" style="left:590.2px;top:296.13px;font-size:12px;font-family:'Liberation Mono',monospace;font-weight:normal;color:#d3d3d4;-webkit-text-stroke:0.3px #d3d3d4;">May 26 7:13:26.000 PM</div>
<div class="t" style="left:760.5px;top:296.13px;font-size:12px;font-family:'Liberation Mono',monospace;font-weight:normal;color:#d3d3d4;-webkit-text-stroke:0.3px #d3d3d4;">frontend</div>
<div class="t" style="left:920.15px;top:296.13px;font-size:12px;font-family:'Liberation Mono',monospace;font-weight:normal;color:#f08a8a;-webkit-text-stroke:0.3px #f08a8a;">error</div>
<div class="t" style="left:1035.35px;top:296.13px;font-size:12px;font-family:'Liberation Mono',monospace;font-weight:normal;color:#d3d3d4;-webkit-text-stroke:0.3px #d3d3d4;">Failed to place order</div>
<svg class="a" style="left:573.25px;top:315.6px;" width="5.4" height="9.8" viewBox="0 0 5.4 9.8"><polyline points="0.3,0.3 5,4.9 0.3,9.5" fill="none" stroke="#c9c9ca" stroke-width="0.8"/></svg>
<div class="t" style="left:590.2px;top:316.13px;font-size:12px;font-family:'Liberation Mono',monospace;font-weight:normal;color:#d3d3d4;-webkit-text-stroke:0.3px #d3d3d4;">May 26 6:12:19.000 PM</div>
<div class="t" style="left:760.5px;top:316.13px;font-size:12px;font-family:'Liberation Mono',monospace;font-weight:normal;color:#d3d3d4;-webkit-text-stroke:0.3px #d3d3d4;">frontend</div>
<div class="t" style="left:920.15px;top:316.13px;font-size:12px;font-family:'Liberation Mono',monospace;font-weight:normal;color:#f08a8a;-webkit-text-stroke:0.3px #f08a8a;">error</div>
<div class="t" style="left:1035.35px;top:316.13px;font-size:12px;font-family:'Liberation Mono',monospace;font-weight:normal;color:#d3d3d4;-webkit-text-stroke:0.3px #d3d3d4;">Failed to place order</div>
<svg class="a" style="left:573.25px;top:335.6px;" width="5.4" height="9.8" viewBox="0 0 5.4 9.8"><polyline points="0.3,0.3 5,4.9 0.3,9.5" fill="none" stroke="#c9c9ca" stroke-width="0.8"/></svg>
<div class="t" style="left:590.2px;top:336.13px;font-size:12px;font-family:'Liberation Mono',monospace;font-weight:normal;color:#d3d3d4;-webkit-text-stroke:0.3px #d3d3d4;">May 26 4:30:36.000 PM</div>
<div class="t" style="left:760.5px;top:336.13px;font-size:12px;font-family:'Liberation Mono',monospace;font-weight:normal;color:#d3d3d4;-webkit-text-stroke:0.3px #d3d3d4;">frontend</div>
<div class="t" style="left:920.15px;top:336.13px;font-size:12px;font-family:'Liberation Mono',monospace;font-weight:normal;color:#f08a8a;-webkit-text-stroke:0.3px #f08a8a;">error</div>
<div class="t" style="left:1035.35px;top:336.13px;font-size:12px;font-family:'Liberation Mono',monospace;font-weight:normal;color:#d3d3d4;-webkit-text-stroke:0.3px #d3d3d4;">Failed to place order</div>
<svg class="a" style="left:573.25px;top:355.6px;" width="5.4" height="9.8" viewBox="0 0 5.4 9.8"><polyline points="0.3,0.3 5,4.9 0.3,9.5" fill="none" stroke="#c9c9ca" stroke-width="0.8"/></svg>
<div class="t" style="left:590.2px;top:356.13px;font-size:12px;font-family:'Liberation Mono',monospace;font-weight:normal;color:#d3d3d4;-webkit-text-stroke:0.3px #d3d3d4;">May 26 5:45:32.000 PM</div>
<div class="t" style="left:760.5px;top:356.13px;font-size:12px;font-family:'Liberation Mono',monospace;font-weight:normal;color:#d3d3d4;-webkit-text-stroke:0.3px #d3d3d4;">frontend</div>
<div class="t" style="left:920.15px;top:356.13px;font-size:12px;font-family:'Liberation Mono',monospace;font-weight:normal;color:#f08a8a;-webkit-text-stroke:0.3px #f08a8a;">error</div>
<div class="t" style="left:1035.35px;top:356.13px;font-size:12px;font-family:'Liberation Mono',monospace;font-weight:normal;color:#d3d3d4;-webkit-text-stroke:0.3px #d3d3d4;">Failed to place order</div>
<svg class="a" style="left:573.25px;top:375.6px;" width="5.4" height="9.8" viewBox="0 0 5.4 9.8"><polyline points="0.3,0.3 5,4.9 0.3,9.5" fill="none" stroke="#c9c9ca" stroke-width="0.8"/></svg>
<div class="t" style="left:590.2px;top:376.13px;font-size:12px;font-family:'Liberation Mono',monospace;font-weight:normal;color:#d3d3d4;-webkit-text-stroke:0.3px #d3d3d4;">May 26 5:44:14.000 PM</div>
<div class="t" style="left:760.5px;top:376.13px;font-size:12px;font-family:'Liberation Mono',monospace;font-weight:normal;color:#d3d3d4;-webkit-text-stroke:0.3px #d3d3d4;">frontend</div>
<div class="t" style="left:920.15px;top:376.13px;font-size:12px;font-family:'Liberation Mono',monospace;font-weight:normal;color:#f08a8a;-webkit-text-stroke:0.3px #f08a8a;">error</div>
<div class="t" style="left:1035.35px;top:376.13px;font-size:12px;font-family:'Liberation Mono',monospace;font-weight:normal;color:#d3d3d4;-webkit-text-stroke:0.3px #d3d3d4;">Failed to place order</div>
<svg class="a" style="left:573.25px;top:395.6px;" width="5.4" height="9.8" viewBox="0 0 5.4 9.8"><polyline points="0.3,0.3 5,4.9 0.3,9.5" fill="none" stroke="#c9c9ca" stroke-width="0.8"/></svg>
<div class="t" style="left:590.2px;top:396.13px;font-size:12px;font-family:'Liberation Mono',monospace;font-weight:normal;color:#d3d3d4;-webkit-text-stroke:0.3px #d3d3d4;">May 26 7:15:29.000 PM</div>
<div class="t" style="left:760.5px;top:396.13px;font-size:12px;font-family:'Liberation Mono',monospace;font-weight:normal;color:#d3d3d4;-webkit-text-stroke:0.3px #d3d3d4;">frontend</div>
<div class="t" style="left:920.15px;top:396.13px;font-size:12px;font-family:'Liberation Mono',monospace;font-weight:normal;color:#f08a8a;-webkit-text-stroke:0.3px #f08a8a;">error</div>
<div class="t" style="left:1035.35px;top:396.13px;font-size:12px;font-family:'Liberation Mono',monospace;font-weight:normal;color:#d3d3d4;-webkit-text-stroke:0.3px #d3d3d4;">Failed to place order</div>
<svg class="a" style="left:573.25px;top:415.6px;" width="5.4" height="9.8" viewBox="0 0 5.4 9.8"><polyline points="0.3,0.3 5,4.9 0.3,9.5" fill="none" stroke="#c9c9ca" stroke-width="0.8"/></svg>
<div class="t" style="left:590.2px;top:416.13px;font-size:12px;font-family:'Liberation Mono',monospace;font-weight:normal;color:#d3d3d4;-webkit-text-stroke:0.3px #d3d3d4;">May 26 8:16:45.000 PM</div>
<div class="t" style="left:760.5px;top:416.13px;font-size:12px;font-family:'Liberation Mono',monospace;font-weight:normal;color:#d3d3d4;-webkit-text-stroke:0.3px #d3d3d4;">frontend</div>
<div class="t" style="left:920.15px;top:416.13px;font-size:12px;font-family:'Liberation Mono',monospace;font-weight:normal;color:#f08a8a;-webkit-text-stroke:0.3px #f08a8a;">error</div>
<div class="t" style="left:1035.35px;top:416.13px;font-size:12px;font-family:'Liberation Mono',monospace;font-weight:normal;color:#d3d3d4;-webkit-text-stroke:0.3px #d3d3d4;">Failed to place order</div>
<svg class="a" style="left:573.25px;top:435.6px;" width="5.4" height="9.8" viewBox="0 0 5.4 9.8"><polyline points="0.3,0.3 5,4.9 0.3,9.5" fill="none" stroke="#c9c9ca" stroke-width="0.8"/></svg>
<div class="t" style="left:590.2px;top:436.13px;font-size:12px;font-family:'Liberation Mono',monospace;font-weight:normal;color:#d3d3d4;-webkit-text-stroke:0.3px #d3d3d4;">May 26 5:49:07.000 PM</div>
<div class="t" style="left:760.5px;top:436.13px;font-size:12px;font-family:'Liberation Mono',monospace;font-weight:normal;color:#d3d3d4;-webkit-text-stroke:0.3px #d3d3d4;">frontend</div>
<div class="t" style="left:920.15px;top:436.13px;font-size:12px;font-family:'Liberation Mono',monospace;font-weight:normal;color:#f08a8a;-webkit-text-stroke:0.3px #f08a8a;">error</div>
<div class="t" style="left:1035.35px;top:436.13px;font-size:12px;font-family:'Liberation Mono',monospace;font-weight:normal;color:#d3d3d4;-webkit-text-stroke:0.3px #d3d3d4;">Failed to place order</div>
<svg class="a" style="left:573.25px;top:455.6px;" width="5.4" height="9.8" viewBox="0 0 5.4 9.8"><polyline points="0.3,0.3 5,4.9 0.3,9.5" fill="none" stroke="#c9c9ca" stroke-width="0.8"/></svg>
<div class="t" style="left:590.2px;top:456.13px;font-size:12px;font-family:'Liberation Mono',monospace;font-weight:normal;color:#d3d3d4;-webkit-text-stroke:0.3px #d3d3d4;">May 26 6:46:24.000 PM</div>
<div class="t" style="left:760.5px;top:456.13px;font-size:12px;font-family:'Liberation Mono',monospace;font-weight:normal;color:#d3d3d4;-webkit-text-stroke:0.3px #d3d3d4;">frontend</div>
<div class="t" style="left:920.15px;top:456.13px;font-size:12px;font-family:'Liberation Mono',monospace;font-weight:normal;color:#f08a8a;-webkit-text-stroke:0.3px #f08a8a;">error</div>
<div class="t" style="left:1035.35px;top:456.13px;font-size:12px;font-family:'Liberation Mono',monospace;font-weight:normal;color:#d3d3d4;-webkit-text-stroke:0.3px #d3d3d4;">Failed to place order</div>
<svg class="a" style="left:573.25px;top:475.6px;" width="5.4" height="9.8" viewBox="0 0 5.4 9.8"><polyline points="0.3,0.3 5,4.9 0.3,9.5" fill="none" stroke="#c9c9ca" stroke-width="0.8"/></svg>
<div class="t" style="left:590.2px;top:476.13px;font-size:12px;font-family:'Liberation Mono',monospace;font-weight:normal;color:#d3d3d4;-webkit-text-stroke:0.3px #d3d3d4;">May 26 4:38:47.000 PM</div>
<div class="t" style="left:760.5px;top:476.13px;font-size:12px;font-family:'Liberation Mono',monospace;font-weight:normal;color:#d3d3d4;-webkit-text-stroke:0.3px #d3d3d4;">frontend</div>
<div class="t" style="left:920.15px;top:476.13px;font-size:12px;font-family:'Liberation Mono',monospace;font-weight:normal;color:#f08a8a;-webkit-text-stroke:0.3px #f08a8a;">error</div>
<div class="t" style="left:1035.35px;top:476.13px;font-size:12px;font-family:'Liberation Mono',monospace;font-weight:normal;color:#d3d3d4;-webkit-text-stroke:0.3px #d3d3d4;">Failed to place order</div>
<svg class="a" style="left:573.25px;top:495.6px;" width="5.4" height="9.8" viewBox="0 0 5.4 9.8"><polyline points="0.3,0.3 5,4.9 0.3,9.5" fill="none" stroke="#c9c9ca" stroke-width="0.8"/></svg>
<div class="t" style="left:590.2px;top:496.13px;font-size:12px;font-family:'Liberation Mono',monospace;font-weight:normal;color:#d3d3d4;-webkit-text-stroke:0.3px #d3d3d4;">May 26 5:10:59.000 PM</div>
<div class="t" style="left:760.5px;top:496.13px;font-size:12px;font-family:'Liberation Mono',monospace;font-weight:normal;color:#d3d3d4;-webkit-text-stroke:0.3px #d3d3d4;">frontend</div>
<div class="t" style="left:920.15px;top:496.13px;font-size:12px;font-family:'Liberation Mono',monospace;font-weight:normal;color:#f08a8a;-webkit-text-stroke:0.3px #f08a8a;">error</div>
<div class="t" style="left:1035.35px;top:496.13px;font-size:12px;font-family:'Liberation Mono',monospace;font-weight:normal;color:#d3d3d4;-webkit-text-stroke:0.3px #d3d3d4;">Failed to place order</div>
<svg class="a" style="left:573.25px;top:515.6px;" width="5.4" height="9.8" viewBox="0 0 5.4 9.8"><polyline points="0.3,0.3 5,4.9 0.3,9.5" fill="none" stroke="#c9c9ca" stroke-width="0.8"/></svg>
<div class="t" style="left:590.2px;top:516.13px;font-size:12px;font-family:'Liberation Mono',monospace;font-weight:normal;color:#d3d3d4;-webkit-text-stroke:0.3px #d3d3d4;">May 26 5:54:03.000 PM</div>
<div class="t" style="left:760.5px;top:516.13px;font-size:12px;font-family:'Liberation Mono',monospace;font-weight:normal;color:#d3d3d4;-webkit-text-stroke:0.3px #d3d3d4;">frontend</div>
<div class="t" style="left:920.15px;top:516.13px;font-size:12px;font-family:'Liberation Mono',monospace;font-weight:normal;color:#f08a8a;-webkit-text-stroke:0.3px #f08a8a;">error</div>
<div class="t" style="left:1035.35px;top:516.13px;font-size:12px;font-family:'Liberation Mono',monospace;font-weight:normal;color:#d3d3d4;-webkit-text-stroke:0.3px #d3d3d4;">Failed to place order</div>
<svg class="a" style="left:573.25px;top:535.6px;" width="5.4" height="9.8" viewBox="0 0 5.4 9.8"><polyline points="0.3,0.3 5,4.9 0.3,9.5" fill="none" stroke="#c9c9ca" stroke-width="0.8"/></svg>
<div class="t" style="left:590.2px;top:536.13px;font-size:12px;font-family:'Liberation Mono',monospace;font-weight:normal;color:#d3d3d4;-webkit-text-stroke:0.3px #d3d3d4;">May 26 8:04:56.000 PM</div>
<div class="t" style="left:760.5px;top:536.13px;font-size:12px;font-family:'Liberation Mono',monospace;font-weight:normal;color:#d3d3d4;-webkit-text-stroke:0.3px #d3d3d4;">frontend</div>
<div class="t" style="left:920.15px;top:536.13px;font-size:12px;font-family:'Liberation Mono',monospace;font-weight:normal;color:#f08a8a;-webkit-text-stroke:0.3px #f08a8a;">error</div>
<div class="t" style="left:1035.35px;top:536.13px;font-size:12px;font-family:'Liberation Mono',monospace;font-weight:normal;color:#d3d3d4;-webkit-text-stroke:0.3px #d3d3d4;">Failed to place order</div>
<svg class="a" style="left:573.25px;top:555.6px;" width="5.4" height="9.8" viewBox="0 0 5.4 9.8"><polyline points="0.3,0.3 5,4.9 0.3,9.5" fill="none" stroke="#c9c9ca" stroke-width="0.8"/></svg>
<div class="t" style="left:590.2px;top:556.13px;font-size:12px;font-family:'Liberation Mono',monospace;font-weight:normal;color:#d3d3d4;-webkit-text-stroke:0.3px #d3d3d4;">May 26 7:42:54.000 PM</div>
<div class="t" style="left:760.5px;top:556.13px;font-size:12px;font-family:'Liberation Mono',monospace;font-weight:normal;color:#d3d3d4;-webkit-text-stroke:0.3px #d3d3d4;">frontend</div>
<div class="t" style="left:920.15px;top:556.13px;font-size:12px;font-family:'Liberation Mono',monospace;font-weight:normal;color:#f08a8a;-webkit-text-stroke:0.3px #f08a8a;">error</div>
<div class="t" style="left:1035.35px;top:556.13px;font-size:12px;font-family:'Liberation Mono',monospace;font-weight:normal;color:#d3d3d4;-webkit-text-stroke:0.3px #d3d3d4;">Failed to place order</div>
<svg class="a" style="left:573.25px;top:575.6px;" width="5.4" height="9.8" viewBox="0 0 5.4 9.8"><polyline points="0.3,0.3 5,4.9 0.3,9.5" fill="none" stroke="#c9c9ca" stroke-width="0.8"/></svg>
<div class="t" style="left:590.2px;top:576.13px;font-size:12px;font-family:'Liberation Mono',monospace;font-weight:normal;color:#d3d3d4;-webkit-text-stroke:0.3px #d3d3d4;">May 26 5:56:44.000 PM</div>
<div class="t" style="left:760.5px;top:576.13px;font-size:12px;font-family:'Liberation Mono',monospace;font-weight:normal;color:#d3d3d4;-webkit-text-stroke:0.3px #d3d3d4;">frontend</div>
<div class="t" style="left:920.15px;top:576.13px;font-size:12px;font-family:'Liberation Mono',monospace;font-weight:normal;color:#f08a8a;-webkit-text-stroke:0.3px #f08a8a;">error</div>
<div class="t" style="left:1035.35px;top:576.13px;font-size:12px;font-family:'Liberation Mono',monospace;font-weight:normal;color:#d3d3d4;-webkit-text-stroke:0.3px #d3d3d4;">Failed to place order</div>
<svg class="a" style="left:573.25px;top:595.6px;" width="5.4" height="9.8" viewBox="0 0 5.4 9.8"><polyline points="0.3,0.3 5,4.9 0.3,9.5" fill="none" stroke="#c9c9ca" stroke-width="0.8"/></svg>
<div class="t" style="left:590.2px;top:596.13px;font-size:12px;font-family:'Liberation Mono',monospace;font-weight:normal;color:#d3d3d4;-webkit-text-stroke:0.3px #d3d3d4;">May 26 4:13:04.000 PM</div>
<div class="t" style="left:760.5px;top:596.13px;font-size:12px;font-family:'Liberation Mono',monospace;font-weight:normal;color:#d3d3d4;-webkit-text-stroke:0.3px #d3d3d4;">frontend</div>
<div class="t" style="left:920.15px;top:596.13px;font-size:12px;font-family:'Liberation Mono',monospace;font-weight:normal;color:#f08a8a;-webkit-text-stroke:0.3px #f08a8a;">error</div>
<div class="t" style="left:1035.35px;top:596.13px;font-size:12px;font-family:'Liberation Mono',monospace;font-weight:normal;color:#d3d3d4;-webkit-text-stroke:0.3px #d3d3d4;">Failed to place order</div>
<svg class="a" style="left:573.25px;top:615.6px;" width="5.4" height="9.8" viewBox="0 0 5.4 9.8"><polyline points="0.3,0.3 5,4.9 0.3,9.5" fill="none" stroke="#c9c9ca" stroke-width="0.8"/></svg>
<div class="t" style="left:590.2px;top:616.13px;font-size:12px;font-family:'Liberation Mono',monospace;font-weight:normal;color:#d3d3d4;-webkit-text-stroke:0.3px #d3d3d4;">May 26 6:56:10.000 PM</div>
<div class="t" style="left:760.5px;top:616.13px;font-size:12px;font-family:'Liberation Mono',monospace;font-weight:normal;color:#d3d3d4;-webkit-text-stroke:0.3px #d3d3d4;">frontend</div>
<div class="t" style="left:920.15px;top:616.13px;font-size:12px;font-family:'Liberation Mono',monospace;font-weight:normal;color:#f08a8a;-webkit-text-stroke:0.3px #f08a8a;">error</div>
<div class="t" style="left:1035.35px;top:616.13px;font-size:12px;font-family:'Liberation Mono',monospace;font-weight:normal;color:#d3d3d4;-webkit-text-stroke:0.3px #d3d3d4;">Failed to place order</div>
<svg class="a" style="left:573.25px;top:635.6px;" width="5.4" height="9.8" viewBox="0 0 5.4 9.8"><polyline points="0.3,0.3 5,4.9 0.3,9.5" fill="none" stroke="#c9c9ca" stroke-width="0.8"/></svg>
<div class="t" style="left:590.2px;top:636.13px;font-size:12px;font-family:'Liberation Mono',monospace;font-weight:normal;color:#d3d3d4;-webkit-text-stroke:0.3px #d3d3d4;">May 26 6:09:55.000 PM</div>
<div class="t" style="left:760.5px;top:636.13px;font-size:12px;font-family:'Liberation Mono',monospace;font-weight:normal;color:#d3d3d4;-webkit-text-stroke:0.3px #d3d3d4;">frontend</div>
<div class="t" style="left:920.15px;top:636.13px;font-size:12px;font-family:'Liberation Mono',monospace;font-weight:normal;color:#f08a8a;-webkit-text-stroke:0.3px #f08a8a;">error</div>
<div class="t" style="left:1035.35px;top:636.13px;font-size:12px;font-family:'Liberation Mono',monospace;font-weight:normal;color:#d3d3d4;-webkit-text-stroke:0.3px #d3d3d4;">Failed to place order</div>
<svg class="a" style="left:573.25px;top:655.6px;" width="5.4" height="9.8" viewBox="0 0 5.4 9.8"><polyline points="0.3,0.3 5,4.9 0.3,9.5" fill="none" stroke="#c9c9ca" stroke-width="0.8"/></svg>
<div class="t" style="left:590.2px;top:656.13px;font-size:12px;font-family:'Liberation Mono',monospace;font-weight:normal;color:#d3d3d4;-webkit-text-stroke:0.3px #d3d3d4;">May 26 6:35:24.000 PM</div>
<div class="t" style="left:760.5px;top:656.13px;font-size:12px;font-family:'Liberation Mono',monospace;font-weight:normal;color:#d3d3d4;-webkit-text-stroke:0.3px #d3d3d4;">frontend</div>
<div class="t" style="left:920.15px;top:656.13px;font-size:12px;font-family:'Liberation Mono',monospace;font-weight:normal;color:#f08a8a;-webkit-text-stroke:0.3px #f08a8a;">error</div>
<div class="t" style="left:1035.35px;top:656.13px;font-size:12px;font-family:'Liberation Mono',monospace;font-weight:normal;color:#d3d3d4;-webkit-text-stroke:0.3px #d3d3d4;">Failed to place order</div>
<svg class="a" style="left:573.25px;top:675.6px;" width="5.4" height="9.8" viewBox="0 0 5.4 9.8"><polyline points="0.3,0.3 5,4.9 0.3,9.5" fill="none" stroke="#c9c9ca" stroke-width="0.8"/></svg>
<div class="t" style="left:590.2px;top:676.13px;font-size:12px;font-family:'Liberation Mono',monospace;font-weight:normal;color:#d3d3d4;-webkit-text-stroke:0.3px #d3d3d4;">May 26 8:21:11.000 PM</div>
<div class="t" style="left:760.5px;top:676.13px;font-size:12px;font-family:'Liberation Mono',monospace;font-weight:normal;color:#d3d3d4;-webkit-text-stroke:0.3px #d3d3d4;">frontend</div>
<div class="t" style="left:920.15px;top:676.13px;font-size:12px;font-family:'Liberation Mono',monospace;font-weight:normal;color:#f08a8a;-webkit-text-stroke:0.3px #f08a8a;">error</div>
<div class="t" style="left:1035.35px;top:676.13px;font-size:12px;font-family:'Liberation Mono',monospace;font-weight:normal;color:#d3d3d4;-webkit-text-stroke:0.3px #d3d3d4;">Failed to place order</div>
<svg class="a" style="left:573.25px;top:695.6px;" width="5.4" height="9.8" viewBox="0 0 5.4 9.8"><polyline points="0.3,0.3 5,4.9 0.3,9.5" fill="none" stroke="#c9c9ca" stroke-width="0.8"/></svg>
<div class="t" style="left:590.2px;top:696.13px;font-size:12px;font-family:'Liberation Mono',monospace;font-weight:normal;color:#d3d3d4;-webkit-text-stroke:0.3px #d3d3d4;">May 26 6:29:48.000 PM</div>
<div class="t" style="left:760.5px;top:696.13px;font-size:12px;font-family:'Liberation Mono',monospace;font-weight:normal;color:#d3d3d4;-webkit-text-stroke:0.3px #d3d3d4;">frontend</div>
<div class="t" style="left:920.15px;top:696.13px;font-size:12px;font-family:'Liberation Mono',monospace;font-weight:normal;color:#f08a8a;-webkit-text-stroke:0.3px #f08a8a;">error</div>
<div class="t" style="left:1035.35px;top:696.13px;font-size:12px;font-family:'Liberation Mono',monospace;font-weight:normal;color:#d3d3d4;-webkit-text-stroke:0.3px #d3d3d4;">Failed to place order</div>
<svg class="a" style="left:573.25px;top:715.6px;" width="5.4" height="9.8" viewBox="0 0 5.4 9.8"><polyline points="0.3,0.3 5,4.9 0.3,9.5" fill="none" stroke="#c9c9ca" stroke-width="0.8"/></svg>
<div class="t" style="left:590.2px;top:716.13px;font-size:12px;font-family:'Liberation Mono',monospace;font-weight:normal;color:#d3d3d4;-webkit-text-stroke:0.3px #d3d3d4;">May 26 5:05:59.000 PM</div>
<div class="t" style="left:760.5px;top:716.13px;font-size:12px;font-family:'Liberation Mono',monospace;font-weight:normal;color:#d3d3d4;-webkit-text-stroke:0.3px #d3d3d4;">frontend</div>
<div class="t" style="left:920.15px;top:716.13px;font-size:12px;font-family:'Liberation Mono',monospace;font-weight:normal;color:#f08a8a;-webkit-text-stroke:0.3px #f08a8a;">error</div>
<div class="t" style="left:1035.35px;top:716.13px;font-size:12px;font-family:'Liberation Mono',monospace;font-weight:normal;color:#d3d3d4;-webkit-text-stroke:0.3px #d3d3d4;">Failed to place order</div>
<svg class="a" style="left:573.25px;top:735.6px;" width="5.4" height="9.8" viewBox="0 0 5.4 9.8"><polyline points="0.3,0.3 5,4.9 0.3,9.5" fill="none" stroke="#c9c9ca" stroke-width="0.8"/></svg>
<div class="t" style="left:590.2px;top:736.13px;font-size:12px;font-family:'Liberation Mono',monospace;font-weight:normal;color:#d3d3d4;-webkit-text-stroke:0.3px #d3d3d4;">May 26 6:41:54.000 PM</div>
<div class="t" style="left:760.5px;top:736.13px;font-size:12px;font-family:'Liberation Mono',monospace;font-weight:normal;color:#d3d3d4;-webkit-text-stroke:0.3px #d3d3d4;">frontend</div>
<div class="t" style="left:920.15px;top:736.13px;font-size:12px;font-family:'Liberation Mono',monospace;font-weight:normal;color:#f08a8a;-webkit-text-stroke:0.3px #f08a8a;">error</div>
<div class="t" style="left:1035.35px;top:736.13px;font-size:12px;font-family:'Liberation Mono',monospace;font-weight:normal;color:#d3d3d4;-webkit-text-stroke:0.3px #d3d3d4;">Failed to place order</div>
<svg class="a" style="left:573.25px;top:755.6px;" width="5.4" height="9.8" viewBox="0 0 5.4 9.8"><polyline points="0.3,0.3 5,4.9 0.3,9.5" fill="none" stroke="#c9c9ca" stroke-width="0.8"/></svg>
<div class="t" style="left:590.2px;top:756.13px;font-size:12px;font-family:'Liberation Mono',monospace;font-weight:normal;color:#d3d3d4;-webkit-text-stroke:0.3px #d3d3d4;">May 26 4:42:11.000 PM</div>
<div class="t" style="left:760.5px;top:756.13px;font-size:12px;font-family:'Liberation Mono',monospace;font-weight:normal;color:#d3d3d4;-webkit-text-stroke:0.3px #d3d3d4;">frontend</div>
<div class="t" style="left:920.15px;top:756.13px;font-size:12px;font-family:'Liberation Mono',monospace;font-weight:normal;color:#f08a8a;-webkit-text-stroke:0.3px #f08a8a;">error</div>
<div class="t" style="left:1035.35px;top:756.13px;font-size:12px;font-family:'Liberation Mono',monospace;font-weight:normal;color:#d3d3d4;-webkit-text-stroke:0.3px #d3d3d4;">Failed to place order</div>
<svg class="a" style="left:573.25px;top:775.6px;" width="5.4" height="9.8" viewBox="0 0 5.4 9.8"><polyline points="0.3,0.3 5,4.9 0.3,9.5" fill="none" stroke="#c9c9ca" stroke-width="0.8"/></svg>
<div class="t" style="left:590.2px;top:776.13px;font-size:12px;font-family:'Liberation Mono',monospace;font-weight:normal;color:#d3d3d4;-webkit-text-stroke:0.3px #d3d3d4;">May 26 7:24:49.000 PM</div>
<div class="t" style="left:760.5px;top:776.13px;font-size:12px;font-family:'Liberation Mono',monospace;font-weight:normal;color:#d3d3d4;-webkit-text-stroke:0.3px #d3d3d4;">frontend</div>
<div class="t" style="left:920.15px;top:776.13px;font-size:12px;font-family:'Liberation Mono',monospace;font-weight:normal;color:#f08a8a;-webkit-text-stroke:0.3px #f08a8a;">error</div>
<div class="t" style="left:1035.35px;top:776.13px;font-size:12px;font-family:'Liberation Mono',monospace;font-weight:normal;color:#d3d3d4;-webkit-text-stroke:0.3px #d3d3d4;">Failed to place order</div>
<svg class="a" style="left:573.25px;top:795.6px;" width="5.4" height="9.8" viewBox="0 0 5.4 9.8"><polyline points="0.3,0.3 5,4.9 0.3,9.5" fill="none" stroke="#c9c9ca" stroke-width="0.8"/></svg>
<div class="t" style="left:590.2px;top:796.13px;font-size:12px;font-family:'Liberation Mono',monospace;font-weight:normal;color:#d3d3d4;-webkit-text-stroke:0.3px #d3d3d4;">May 26 5:54:19.000 PM</div>
<div class="t" style="left:760.5px;top:796.13px;font-size:12px;font-family:'Liberation Mono',monospace;font-weight:normal;color:#d3d3d4;-webkit-text-stroke:0.3px #d3d3d4;">frontend</div>
<div class="t" style="left:920.15px;top:796.13px;font-size:12px;font-family:'Liberation Mono',monospace;font-weight:normal;color:#f08a8a;-webkit-text-stroke:0.3px #f08a8a;">error</div>
<div class="t" style="left:1035.35px;top:796.13px;font-size:12px;font-family:'Liberation Mono',monospace;font-weight:normal;color:#d3d3d4;-webkit-text-stroke:0.3px #d3d3d4;">Failed to place order</div>
<svg class="a" style="left:573.25px;top:815.6px;" width="5.4" height="9.8" viewBox="0 0 5.4 9.8"><polyline points="0.3,0.3 5,4.9 0.3,9.5" fill="none" stroke="#c9c9ca" stroke-width="0.8"/></svg>
<div class="t" style="left:590.2px;top:816.13px;font-size:12px;font-family:'Liberation Mono',monospace;font-weight:normal;color:#d3d3d4;-webkit-text-stroke:0.3px #d3d3d4;">May 26 7:42:50.000 PM</div>
<div class="t" style="left:760.5px;top:816.13px;font-size:12px;font-family:'Liberation Mono',monospace;font-weight:normal;color:#d3d3d4;-webkit-text-stroke:0.3px #d3d3d4;">frontend</div>
<div class="t" style="left:920.15px;top:816.13px;font-size:12px;font-family:'Liberation Mono',monospace;font-weight:normal;color:#f08a8a;-webkit-text-stroke:0.3px #f08a8a;">error</div>
<div class="t" style="left:1035.35px;top:816.13px;font-size:12px;font-family:'Liberation Mono',monospace;font-weight:normal;color:#d3d3d4;-webkit-text-stroke:0.3px #d3d3d4;">Failed to place order</div>
<svg class="a" style="left:573.25px;top:835.6px;" width="5.4" height="9.8" viewBox="0 0 5.4 9.8"><polyline points="0.3,0.3 5,4.9 0.3,9.5" fill="none" stroke="#c9c9ca" stroke-width="0.8"/></svg>
<div class="t" style="left:590.2px;top:836.13px;font-size:12px;font-family:'Liberation Mono',monospace;font-weight:normal;color:#d3d3d4;-webkit-text-stroke:0.3px #d3d3d4;">May 26 8:23:58.000 PM</div>
<div class="t" style="left:760.5px;top:836.13px;font-size:12px;font-family:'Liberation Mono',monospace;font-weight:normal;color:#d3d3d4;-webkit-text-stroke:0.3px #d3d3d4;">frontend</div>
<div class="t" style="left:920.15px;top:836.13px;font-size:12px;font-family:'Liberation Mono',monospace;font-weight:normal;color:#f08a8a;-webkit-text-stroke:0.3px #f08a8a;">error</div>
<div class="t" style="left:1035.35px;top:836.13px;font-size:12px;font-family:'Liberation Mono',monospace;font-weight:normal;color:#d3d3d4;-webkit-text-stroke:0.3px #d3d3d4;">Failed to place order</div>
<svg class="a" style="left:573.25px;top:855.6px;" width="5.4" height="9.8" viewBox="0 0 5.4 9.8"><polyline points="0.3,0.3 5,4.9 0.3,9.5" fill="none" stroke="#c9c9ca" stroke-width="0.8"/></svg>
<div class="t" style="left:590.2px;top:856.13px;font-size:12px;font-family:'Liberation Mono',monospace;font-weight:normal;color:#d3d3d4;-webkit-text-stroke:0.3px #d3d3d4;">May 26 8:12:10.000 PM</div>
<div class="t" style="left:760.5px;top:856.13px;font-size:12px;font-family:'Liberation Mono',monospace;font-weight:normal;color:#d3d3d4;-webkit-text-stroke:0.3px #d3d3d4;">frontend</div>
<div class="t" style="left:920.15px;top:856.13px;font-size:12px;font-family:'Liberation Mono',monospace;font-weight:normal;color:#f08a8a;-webkit-text-stroke:0.3px #f08a8a;">error</div>
<div class="t" style="left:1035.35px;top:856.13px;font-size:12px;font-family:'Liberation Mono',monospace;font-weight:normal;color:#d3d3d4;-webkit-text-stroke:0.3px #d3d3d4;">Failed to place order</div>
<svg class="a" style="left:573.25px;top:875.6px;" width="5.4" height="9.8" viewBox="0 0 5.4 9.8"><polyline points="0.3,0.3 5,4.9 0.3,9.5" fill="none" stroke="#c9c9ca" stroke-width="0.8"/></svg>
<div class="t" style="left:590.2px;top:876.13px;font-size:12px;font-family:'Liberation Mono',monospace;font-weight:normal;color:#d3d3d4;-webkit-text-stroke:0.3px #d3d3d4;">May 26 5:10:36.000 PM</div>
<div class="t" style="left:760.5px;top:876.13px;font-size:12px;font-family:'Liberation Mono',monospace;font-weight:normal;color:#d3d3d4;-webkit-text-stroke:0.3px #d3d3d4;">frontend</div>
<div class="t" style="left:920.15px;top:876.13px;font-size:12px;font-family:'Liberation Mono',monospace;font-weight:normal;color:#f08a8a;-webkit-text-stroke:0.3px #f08a8a;">error</div>
<div class="t" style="left:1035.35px;top:876.13px;font-size:12px;font-family:'Liberation Mono',monospace;font-weight:normal;color:#d3d3d4;-webkit-text-stroke:0.3px #d3d3d4;">Failed to place order</div>
<svg class="a" style="left:573.25px;top:895.6px;" width="5.4" height="9.8" viewBox="0 0 5.4 9.8"><polyline points="0.3,0.3 5,4.9 0.3,9.5" fill="none" stroke="#c9c9ca" stroke-width="0.8"/></svg>
<div class="t" style="left:590.2px;top:896.13px;font-size:12px;font-family:'Liberation Mono',monospace;font-weight:normal;color:#d3d3d4;-webkit-text-stroke:0.3px #d3d3d4;">May 26 8:01:12.000 PM</div>
<div class="t" style="left:760.5px;top:896.13px;font-size:12px;font-family:'Liberation Mono',monospace;font-weight:normal;color:#d3d3d4;-webkit-text-stroke:0.3px #d3d3d4;">frontend</div>
<div class="t" style="left:920.15px;top:896.13px;font-size:12px;font-family:'Liberation Mono',monospace;font-weight:normal;color:#f08a8a;-webkit-text-stroke:0.3px #f08a8a;">error</div>
<div class="t" style="left:1035.35px;top:896.13px;font-size:12px;font-family:'Liberation Mono',monospace;font-weight:normal;color:#d3d3d4;-webkit-text-stroke:0.3px #d3d3d4;">Failed to place order</div>
<svg class="a" style="left:573.25px;top:915.6px;" width="5.4" height="9.8" viewBox="0 0 5.4 9.8"><polyline points="0.3,0.3 5,4.9 0.3,9.5" fill="none" stroke="#c9c9ca" stroke-width="0.8"/></svg>
<div class="t" style="left:590.2px;top:916.13px;font-size:12px;font-family:'Liberation Mono',monospace;font-weight:normal;color:#d3d3d4;-webkit-text-stroke:0.3px #d3d3d4;">May 26 6:25:44.000 PM</div>
<div class="t" style="left:760.5px;top:916.13px;font-size:12px;font-family:'Liberation Mono',monospace;font-weight:normal;color:#d3d3d4;-webkit-text-stroke:0.3px #d3d3d4;">frontend</div>
<div class="t" style="left:920.15px;top:916.13px;font-size:12px;font-family:'Liberation Mono',monospace;font-weight:normal;color:#f08a8a;-webkit-text-stroke:0.3px #f08a8a;">error</div>
<div class="t" style="left:1035.35px;top:916.13px;font-size:12px;font-family:'Liberation Mono',monospace;font-weight:normal;color:#d3d3d4;-webkit-text-stroke:0.3px #d3d3d4;">Failed to place order</div>
<div class="a" style="left:0;top:0;width:1800px;height:928px;box-sizing:border-box;border:1px solid #3e4146;border-top:0.5px solid #4a4d52;border-radius:0 0 11px 11px;box-shadow:0 0 0 20px #000;"></div>
</div></body></html>
